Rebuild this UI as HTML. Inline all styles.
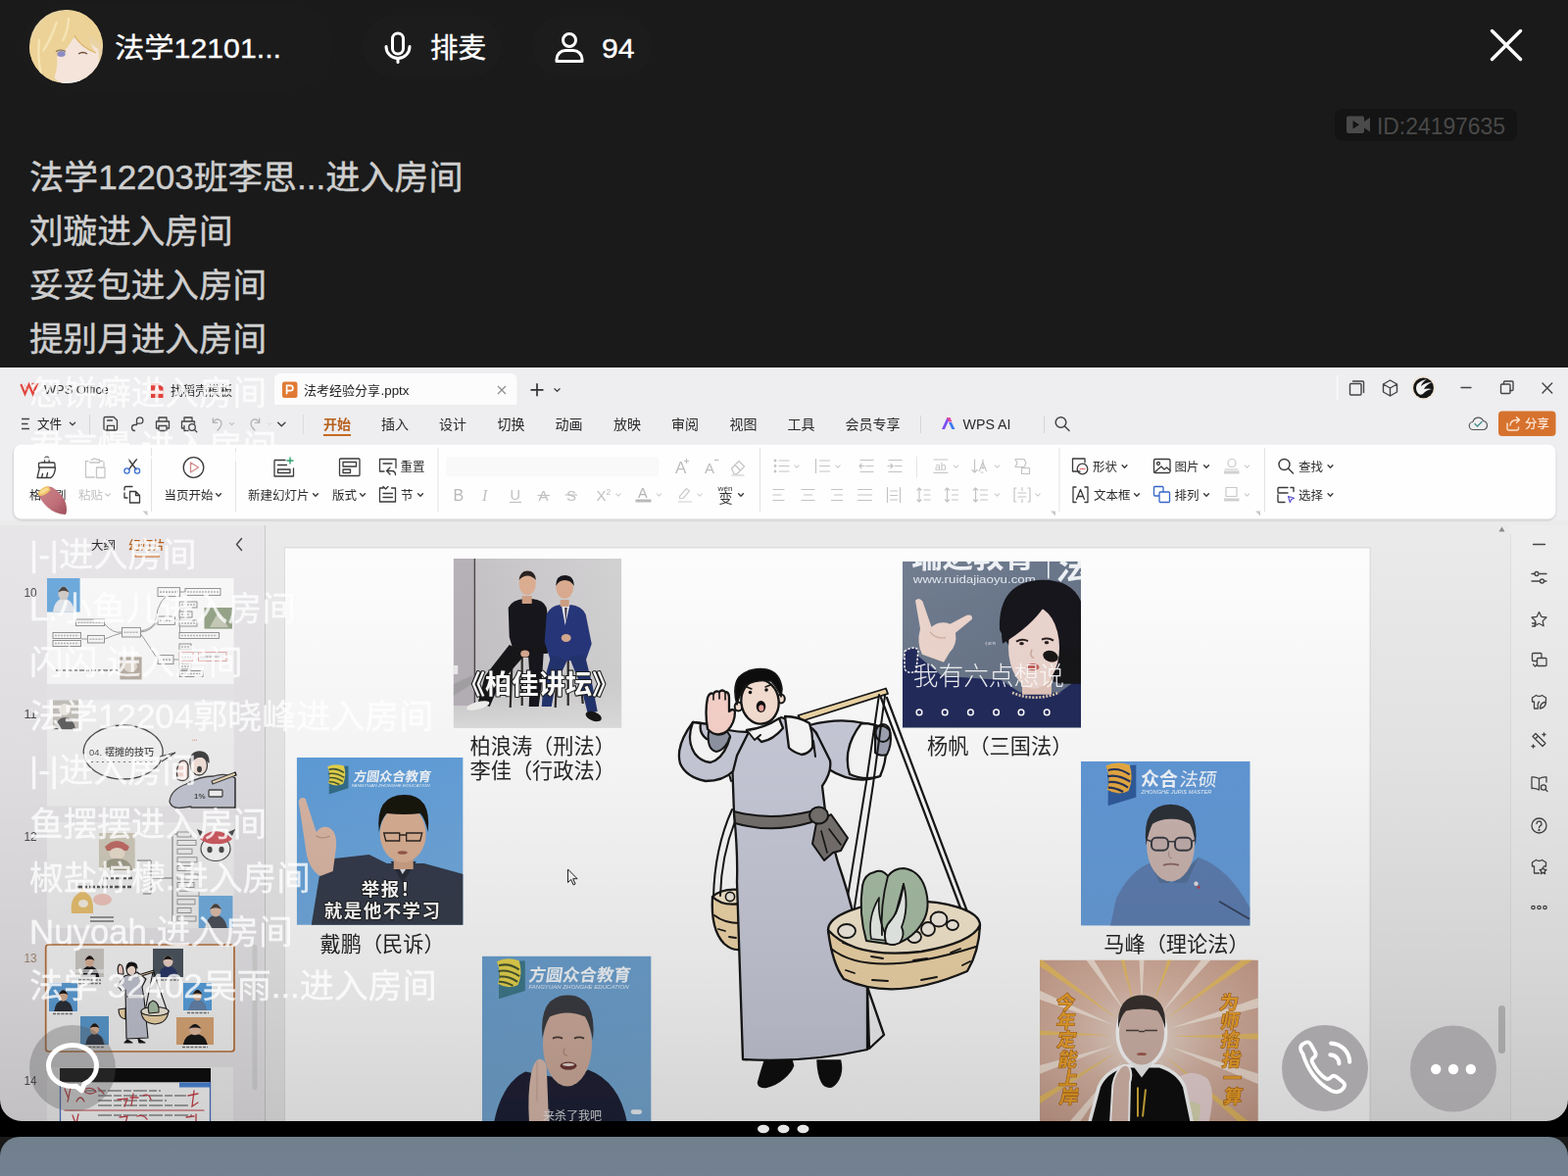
<!DOCTYPE html>
<html lang="zh"><head><meta charset="utf-8"><title>live</title>
<style>html,body{margin:0;padding:0;background:#1a1a1a}body{width:1600px;height:1200px;overflow:hidden;font-family:"Liberation Sans",sans-serif}svg{display:block}text.cj{font-family:"Liberation Sans","Noto Sans CJK SC",sans-serif}</style></head>
<body>
<svg width="1600" height="1200" viewBox="0 0 1600 1200">
<rect width="1600" height="1200" fill="#1a1a1a"/>
<rect x="22" y="4" width="318" height="88" rx="44" fill="#1b1b1b"/>
<rect x="370" y="16" width="142" height="62" rx="31" fill="#1c1c1c"/>
<rect x="543" y="16" width="122" height="62" rx="31" fill="#1c1c1c"/>
<defs><radialGradient id="av" cx="45%" cy="40%" r="65%"><stop offset="0" stop-color="#f3ddb0"/><stop offset=".6" stop-color="#e8c98f"/><stop offset="1" stop-color="#cdb79a"/></radialGradient><clipPath id="avc"><circle cx="67.5" cy="47.5" r="37.5"/></clipPath></defs>
<g clip-path="url(#avc)"><rect x="30" y="10" width="76" height="76" fill="#e9d3a4"/><path d="M62 40 q22 -4 38 10 q4 22 -8 36 q-20 8 -36 -6 q-6 -22 6 -40z" fill="#f4e4da"/><path d="M28 64 Q30 18 68 10 Q104 12 108 54 Q100 40 90 36 Q92 46 98 54 Q82 48 76 36 Q70 50 58 58 Q60 70 52 88 Q36 84 28 64Z" fill="#ecd296"/><path d="M58 22 Q52 40 44 52 M70 18 Q70 30 64 42 M40 40 Q38 60 42 76" stroke="#f7e8bd" stroke-width="2.4" fill="none" opacity=".8"/><path d="M76 36 Q82 48 98 54" stroke="#d9b46c" stroke-width="1.2" fill="none"/><ellipse cx="62.5" cy="55" rx="4.2" ry="3" fill="#8c8cc4"/><path d="M57 52.5 q5 -3 10 0" stroke="#6b5a4a" stroke-width="1.2" fill="none"/><path d="M80 55 q4.5 -3 9 0" stroke="#6b4a3a" stroke-width="1.4" fill="none"/><path d="M60 86 q12 -8 30 -2 v6 h-30z" fill="#efe9e6"/></g>
<text class="cj" x="117" y="58.5" font-size="28.5" fill="#fff" stroke="#fff" stroke-width="0.34" textLength="170" lengthAdjust="spacingAndGlyphs">法学12101...</text>
<g fill="none" stroke="#fff" stroke-width="3" stroke-linecap="round"><rect x="400.5" y="34" width="11" height="21" rx="5.5"/><path d="M394 47.5 a12 12 0 0 0 24 0"/><path d="M406 60 v3.5"/></g>
<text class="cj" x="439" y="58.5" font-size="28.5" fill="#fff" stroke="#fff" stroke-width="0.34">排麦</text>
<g fill="none" stroke="#fff" stroke-width="3" stroke-linejoin="round"><circle cx="581" cy="41" r="6.5"/><path d="M568 62.5 v-2 a9 9 0 0 1 9 -9 h8 a9 9 0 0 1 9 9 v2 z"/></g>
<text class="cj" x="614" y="58.5" font-size="28.5" fill="#fff" stroke="#fff" stroke-width="0.34" textLength="33.5" lengthAdjust="spacingAndGlyphs">94</text>
<path d="M1522.5 31.5 L1551.5 60.5 M1551.5 31.5 L1522.5 60.5" stroke="#fff" stroke-width="3.4" stroke-linecap="round"/>
<rect x="1362" y="111" width="186" height="33" rx="8" fill="#141414"/>
<path d="M1374 120.5 a2 2 0 0 1 2 -2 h14 a2 2 0 0 1 2 2 v3.5 l6 -4 v14.5 l-6 -4 v3.5 a2 2 0 0 1 -2 2 h-14 a2 2 0 0 1 -2 -2 z" fill="#4a4a4a"/><path d="M1380.5 123 l6.5 4.3 l-6.5 4.3z" fill="#141414"/>
<text x="1405" y="136.5" font-size="24" fill="#494949" font-weight="normal" text-anchor="start" font-family="Liberation Sans, sans-serif" textLength="131" lengthAdjust="spacingAndGlyphs">ID:24197635</text>
<text class="cj" x="30" y="193" font-size="34.6" fill="#cfcfcf" stroke="#cfcfcf" stroke-width="0.45" textLength="442.5" lengthAdjust="spacingAndGlyphs">法学12203班李思...进入房间</text>
<text class="cj" x="30" y="248" font-size="34.6" fill="#cfcfcf" stroke="#cfcfcf" stroke-width="0.45">刘璇进入房间</text>
<text class="cj" x="30" y="303" font-size="34.6" fill="#cfcfcf" stroke="#cfcfcf" stroke-width="0.45">妥妥包进入房间</text>
<text class="cj" x="30" y="358" font-size="34.6" fill="#cfcfcf" stroke="#cfcfcf" stroke-width="0.45">提别月进入房间</text>
<rect x="0" y="1120" width="1600" height="40" fill="#000"/>
<defs><clipPath id="shc"><path d="M0 375 H1600 V1122 a22 22 0 0 1 -22 22 H22 a22 22 0 0 1 -22 -22 Z"/></clipPath></defs>
<defs><filter id="soft" x="0" y="0" width="100%" height="100%" filterUnits="userSpaceOnUse"><feGaussianBlur stdDeviation="0.38"/></filter></defs>
<g clip-path="url(#shc)"><g filter="url(#soft)">
<rect x="0" y="375" width="1600" height="770" fill="#ececec"/>
<rect x="0" y="375" width="1600" height="170" fill="#eeedef"/>
<rect x="0" y="531" width="1600" height="14" fill="#ebebec"/>
<path d="M21.3 392 l4.2 10 l4 -9.5 l4 9.5 l4.4 -10.3 h-5.5" fill="none" stroke="#e0463c" stroke-width="2.1" stroke-linejoin="miter"/>
<path d="M25.2 392.5 l2.2 5.2 M33.6 392.2 l-1.4 3.4" fill="none" stroke="#f6b1ab" stroke-width="1" />
<text x="45" y="402" font-size="13" fill="#333" font-weight="normal" text-anchor="start" font-family="Liberation Sans, sans-serif" textLength="66" lengthAdjust="spacingAndGlyphs">WPS Office</text>
<path d="M154 391 h8 l4.5 4.5 v10.5 h-12.5z" fill="#e0433a"/><path d="M157.5 401 l2.7 -7 l2.7 7 m-4.4 -2.3 h3.4" stroke="#fff" stroke-width="1.4" fill="none"/><rect x="152" y="398.5" width="14" height="3.4" fill="#f5b7b2" opacity=".85"/>
<text class="cj" x="174" y="403" font-size="12.6" fill="#2b2b2b">找稻壳模板</text>
<path d="M280 413 V387 a6 6 0 0 1 6 -6 H521.5 a6 6 0 0 1 6 6 V413 Z" fill="#fcfcfc"/>
<rect x="288" y="389.5" width="15.5" height="16.5" fill="#e07a34" rx="2.5"/>
<path d="M292.6 402.3 v-9 h3.6 a2.7 2.7 0 0 1 0 5.4 h-3.6" stroke="#fff" stroke-width="1.7" fill="none"/>
<text class="cj" x="310" y="403" font-size="13" fill="#222">法考经验分享</text>
<text x="388.5" y="402.6" font-size="13.4" fill="#222" font-weight="normal" text-anchor="start" font-family="Liberation Sans, sans-serif" textLength="29" lengthAdjust="spacingAndGlyphs">.pptx</text>
<path d="M508 394 l8 8 M516 394 l-8 8" fill="none" stroke="#8e8e8e" stroke-width="1.2" />
<path d="M541.5 397.8 h13 M548 391.3 v13" fill="none" stroke="#333" stroke-width="1.7" />
<path d="M565.9 396.7L568.5 399.3L571.1 396.7" fill="none" stroke="#444" stroke-width="1.3" stroke-linecap="round" stroke-linejoin="round"/>
<path d="M1364.5 383L1364.5 407.5" stroke="#fbfbfb" stroke-width="1.5" fill="none" />
<g fill="none" stroke="#444" stroke-width="1.4" stroke-linecap="round" stroke-linejoin="round" >
<rect x="1377.5" y="391.5" width="11.5" height="11.5" rx="1"/><path d="M1380.5 389 h10 a1 1 0 0 1 1 1 v10.5"/>
<path d="M1418.5 388 l7 4 v8 l-7 4 l-7 -4 v-8 z M1411.5 392 l7 4 l7 -4 M1418.5 396 v8"/>
<path d="M1491 395.5 h10"/>
<rect x="1531.5" y="392" width="9.5" height="9.5" rx="1"/><path d="M1534.5 392 v-2 a1 1 0 0 1 1 -1 h7.5 a1 1 0 0 1 1 1 v7.5 a1 1 0 0 1 -1 1 h-2"/>
<path d="M1574 391 l9.7 10 M1583.7 391 l-9.7 10"/>
</g>
<circle cx="1452.5" cy="395.8" r="11.6" fill="#efe3cf"/><circle cx="1452.5" cy="395.8" r="10.4" fill="#151515"/><path d="M1446 392 q4 -4 10 -5 q-5 3 -6 7 q5 -4 11 -4 q-6 3 -8 7 q4 -1 8 0 q-6 1 -9 5 q-4 2 -6 -2 q-2 -4 0 -8z" fill="#f2f2f2"/>
<path d="M22 427.5 h8 M22 432.5 h6.5 M22 437.5 h8" fill="none" stroke="#444" stroke-width="1.4" />
<text class="cj" x="38" y="437.2" font-size="12.6" fill="#222">文件</text>
<path d="M71.4 431.2L74 433.8L76.6 431.2" fill="none" stroke="#444" stroke-width="1.3" stroke-linecap="round" stroke-linejoin="round"/>
<path d="M91.5 423L91.5 443" stroke="#d6d6d6" stroke-width="1" fill="none" />
<g fill="none" stroke="#444" stroke-width="1.3" stroke-linecap="round" stroke-linejoin="round" >
<path d="M106 427 a1.5 1.5 0 0 1 1.5 -1.5 h8.5 l3.5 3.5 v8.5 a1.5 1.5 0 0 1 -1.5 1.5 h-10.5 a1.5 1.5 0 0 1 -1.5 -1.5 z M109.5 439.3 v-5 h7 v5 M109.5 429 h5"/>
<path d="M137.5 439.5 a3 3 0 1 1 0 -6 h2 v-4.5 a3.2 3.2 0 1 1 3.2 3.2 h-3"/>
<path d="M162 430 v-4 h8 v4 M162 437 h-2.5 v-7 h13 v7 h-2.5 M162 434.5 h8 v5 h-8 z"/>
<path d="M188 430 v-4 h8 v4 M188 437 h-2.5 v-7 h13 v2 M188 434.5 v5 h4"/><circle cx="196" cy="436" r="3.3"/><path d="M198.4 438.4 l2.4 2.4"/>
</g>
<g fill="none" stroke="#b4b4b4" stroke-width="1.3" stroke-linecap="round" stroke-linejoin="round" >
<path d="M217.5 431 q4 -6 8 -1 q2 4 -3.5 9 M217.3 427 v4.3 h4.3"/>
<path d="M264.5 431 q-4 -6 -8 -1 q-2 4 3.5 9 M264.7 427 v4.3 h-4.3"/>
</g>
<path d="M234.3 431.4L236.5 433.6L238.7 431.4" fill="none" stroke="#c0c0c0" stroke-width="1.1" stroke-linecap="round" stroke-linejoin="round"/>
<path d="M273 431.5L275 433.5L277 431.5" fill="none" stroke="#d6d6d6" stroke-width="1" stroke-linecap="round" stroke-linejoin="round"/>
<path d="M283.7 431.2L287.3 434.8L290.90000000000003 431.2" fill="none" stroke="#444" stroke-width="1.5" stroke-linecap="round" stroke-linejoin="round"/>
<path d="M309.5 423L309.5 443" stroke="#dddddd" stroke-width="1" fill="none" />
<text class="cj" x="330" y="438" font-size="14" fill="#b8611f" font-weight="bold">开始</text>
<rect x="330" y="443" width="28" height="2" fill="#c56a24"/>
<text class="cj" x="389" y="438" font-size="14" fill="#2b2b2b">插入</text>
<text class="cj" x="448" y="438" font-size="14" fill="#2b2b2b">设计</text>
<text class="cj" x="507.5" y="438" font-size="14" fill="#2b2b2b">切换</text>
<text class="cj" x="566.5" y="438" font-size="14" fill="#2b2b2b">动画</text>
<text class="cj" x="626" y="438" font-size="14" fill="#2b2b2b">放映</text>
<text class="cj" x="685" y="438" font-size="14" fill="#2b2b2b">审阅</text>
<text class="cj" x="744.5" y="438" font-size="14" fill="#2b2b2b">视图</text>
<text class="cj" x="803.5" y="438" font-size="14" fill="#2b2b2b">工具</text>
<text class="cj" x="862.5" y="438" font-size="14" fill="#2b2b2b">会员专享</text>
<path d="M939.5 424L939.5 442" stroke="#d6d6d6" stroke-width="1" fill="none" />
<path d="M961 438 l5.5 -12 h3 l-5.5 12z" fill="#7b4df0"/><path d="M968 431 l3 0 l3.5 7 h-3.2z" fill="#3b7cf5"/><path d="M966 426 h3.5 l2 4.5 h-3.2z" fill="#e2489d"/>
<text x="982.5" y="437.8" font-size="14" fill="#2b2b2b" font-weight="normal" text-anchor="start" font-family="Liberation Sans, sans-serif" textLength="49" lengthAdjust="spacingAndGlyphs">WPS AI</text>
<path d="M1065.5 424L1065.5 442" stroke="#d6d6d6" stroke-width="1" fill="none" />
<g fill="none" stroke="#444" stroke-width="1.5" stroke-linecap="round" stroke-linejoin="round" >
<circle cx="1082.5" cy="431" r="5.3"/><path d="M1086.5 435 l4.5 4.5"/>
</g>
<g fill="none" stroke="#555" stroke-width="1.2" stroke-linecap="round" stroke-linejoin="round" >
<path d="M1503.5 438.5 a4 4 0 0 1 -0.5 -8 a5.5 5.5 0 0 1 10.5 -1 a4.6 4.6 0 0 1 0.5 9 z"/>
</g>
<path d="M1505 432.5 l2.5 2.5 l4.5 -4.5" fill="none" stroke="#3f8f8a" stroke-width="1.3" stroke-linecap="round" stroke-linejoin="round"/>
<rect x="1529" y="419.5" width="58.5" height="25.5" fill="#d6722f" rx="4"/>
<path d="M1538 432 v5.5 a1.5 1.5 0 0 0 1.5 1.5 h8.5 a1.5 1.5 0 0 0 1.5 -1.5 v-1.5 M1541 434 q0.5 -5.5 7 -5.5 h2 M1547.5 425.8 l3 2.7 l-3 2.7" fill="none" stroke="#fbe3cf" stroke-width="1.4" stroke-linecap="round" stroke-linejoin="round"/>
<text class="cj" x="1556" y="437.2" font-size="12.4" fill="#fbe6d6" font-weight="500">分享</text>
<rect x="13" y="454.5" width="1575" height="77" rx="9" fill="#000" opacity=".05"/>
<rect x="12" y="453" width="1577" height="79.5" rx="10" fill="#000" opacity=".03"/>
<rect x="14" y="453.5" width="1573.5" height="76" fill="#fefefe" rx="8"/>
<g fill="none" stroke="#3a3a3a" stroke-width="1.3" stroke-linecap="round" stroke-linejoin="round" >
<path d="M45.5 472 v-3.5 a2.3 2.3 0 0 1 4.6 0 v3.5 M39.5 477 v-3.5 a1.5 1.5 0 0 1 1.5 -1.5 h13.5 a1.5 1.5 0 0 1 1.5 1.5 v3.5 z M40.5 477 l-2.5 10.5 h14 q4 -3 4.5 -10.5 M42.5 487.5 l1 -4 M47.5 487.5 l1 -5"/>
</g>
<text class="cj" x="30" y="510.3" font-size="12.5" fill="#2e2e2e">格式刷</text>
<g fill="none" stroke="#c6c6c6" stroke-width="1.3" stroke-linecap="round" stroke-linejoin="round" >
<path d="M92 470.5 h-4.5 v16.5 h9 M101.5 470.5 h4.5 v5 M92 472 v-3 h3 a2 2 0 0 1 3.5 0 h3 v3 z"/><rect x="98.5" y="477" width="8.5" height="10.5"/>
</g>
<text class="cj" x="80" y="510.3" font-size="12.5" fill="#c2c2c2">粘贴</text>
<path d="M107.6 503.8L110 506.2L112.4 503.8" fill="none" stroke="#c2c2c2" stroke-width="1.2" stroke-linecap="round" stroke-linejoin="round"/>
<g fill="none" stroke="#3a3a3a" stroke-width="1.3" stroke-linecap="round" stroke-linejoin="round" >
<path d="M131 468.5 l8 10.5 M139.5 468.5 l-8 10.5"/>
</g>
<g fill="none" stroke="#3b6fd4" stroke-width="1.3" stroke-linecap="round" stroke-linejoin="round" >
<circle cx="129.5" cy="480.5" r="2.6"/><circle cx="140" cy="480.5" r="2.6"/>
</g>
<g fill="none" stroke="#3a3a3a" stroke-width="1.3" stroke-linecap="round" stroke-linejoin="round" >
<path d="M127 500 v-2 a1.5 1.5 0 0 1 1.5 -1.5 h6.5 M127 503 v5 h3"/><path d="M132.5 501.5 h6 l4 4 v7.5 h-10z M138.5 501.5 v4 h4"/>
</g>
<path d="M145.5 521.5 h5 v5 z" fill="#c9c9c9" />
<path d="M154.5 457L154.5 522" stroke="#e3e3e3" stroke-width="1" fill="none" />
<g fill="none" stroke="#3a3a3a" stroke-width="1.3" stroke-linecap="round" stroke-linejoin="round" >
<circle cx="197.5" cy="477" r="10.3"/>
</g>
<path d="M194.5 472 l8 5 l-8 5z" fill="none" stroke="#d08b8b" stroke-width="1.3" stroke-linejoin="round"/>
<text class="cj" x="167.5" y="510.3" font-size="12.5" fill="#2e2e2e">当页开始</text>
<path d="M220.6 503.8L223 506.2L225.4 503.8" fill="none" stroke="#3a3a3a" stroke-width="1.4" stroke-linecap="round" stroke-linejoin="round"/>
<path d="M240.5 457L240.5 522" stroke="#e3e3e3" stroke-width="1" fill="none" />
<g fill="none" stroke="#3a3a3a" stroke-width="1.3" stroke-linecap="round" stroke-linejoin="round" >
<path d="M291 469.5 h-11 v16.5 h19.5 v-8 M283.5 474.5 h9 M283.5 479 h12.5 v3.5 h-12.5z"/>
</g>
<path d="M296 466.5 v7 M292.5 470 h7" fill="none" stroke="#2f9e6e" stroke-width="1.4" />
<text class="cj" x="253" y="510.3" font-size="12.5" fill="#2e2e2e">新建幻灯片</text>
<path d="M319.6 503.8L322 506.2L324.4 503.8" fill="none" stroke="#3a3a3a" stroke-width="1.4" stroke-linecap="round" stroke-linejoin="round"/>
<g fill="none" stroke="#3a3a3a" stroke-width="1.3" stroke-linecap="round" stroke-linejoin="round" >
<rect x="346.5" y="468" width="20.5" height="17.5" rx="1"/><rect x="350" y="471.5" width="13.5" height="4.5"/><rect x="350" y="479" width="7.5" height="3.5"/>
</g>
<text class="cj" x="339" y="510.3" font-size="12.5" fill="#2e2e2e">版式</text>
<path d="M367.6 503.8L370 506.2L372.4 503.8" fill="none" stroke="#3a3a3a" stroke-width="1.4" stroke-linecap="round" stroke-linejoin="round"/>
<g fill="none" stroke="#3a3a3a" stroke-width="1.3" stroke-linecap="round" stroke-linejoin="round" >
<path d="M392 481 h-4.5 v-12.5 h16.5 v9 M391 473 h9 M398 484 l-3.5 -3.5 l3.5 -3.5 M394.5 480.5 h5 q4 0 4 4"/>
<path d="M391 498 h-3.5 v14 h16 v-14 h-4 M391 496.5 l2.5 2.5 l2.5 -2.5 M391 503.5 h9.5 M391 507.5 h9.5"/>
</g>
<text class="cj" x="408.5" y="481.3" font-size="12.5" fill="#2e2e2e">重置</text>
<text class="cj" x="409" y="510.3" font-size="12.5" fill="#2e2e2e">节</text>
<path d="M426.6 503.8L429 506.2L431.4 503.8" fill="none" stroke="#3a3a3a" stroke-width="1.4" stroke-linecap="round" stroke-linejoin="round"/>
<path d="M447 457L447 522" stroke="#e3e3e3" stroke-width="1" fill="none" />
<rect x="455" y="466" width="217" height="20.5" fill="#f9f9f9" rx="3"/>
<text x="689" y="482.5" font-size="17" fill="#bdbdbd" font-weight="normal" text-anchor="start" font-family="Liberation Sans, sans-serif">A</text>
<path d="M700.5 468 v5 M698 470.5 h5" fill="none" stroke="#bdbdbd" stroke-width="1.1" />
<text x="719" y="482.5" font-size="15" fill="#bdbdbd" font-weight="normal" text-anchor="start" font-family="Liberation Sans, sans-serif">A</text>
<path d="M729 469.5 h4.5" fill="none" stroke="#bdbdbd" stroke-width="1.1" />
<g fill="none" stroke="#c4c4c4" stroke-width="1.2" stroke-linecap="round" stroke-linejoin="round" >
<path d="M746.5 478 l7.5 -7.5 l5.5 5.5 l-7.5 7.5 h-3z M750 474.5 l5.5 5.5 M747 485 h12"/>
</g>
<text x="462.5" y="510.5" font-size="16" fill="#b8b8b8" font-weight="normal" text-anchor="start" font-family="Liberation Sans, sans-serif">B</text>
<text x="492" y="510.5" font-size="16" fill="#c2c2c2" font-style="italic" font-family="Liberation Serif, serif">I</text>
<text x="520.5" y="509.5" font-size="14.5" fill="#c0c0c0" font-weight="normal" text-anchor="start" font-family="Liberation Sans, sans-serif">U</text>
<path d="M520 512.5 h12" fill="none" stroke="#c0c0c0" stroke-width="1.1" />
<text x="549.5" y="510.5" font-size="15" fill="#c0c0c0" font-weight="normal" text-anchor="start" font-family="Liberation Sans, sans-serif">A</text>
<path d="M548.5 505.5 h12.5" fill="none" stroke="#c0c0c0" stroke-width="1.1" />
<text x="578" y="510.5" font-size="15" fill="#c0c0c0" font-weight="normal" text-anchor="start" font-family="Liberation Sans, sans-serif">S</text>
<path d="M576.5 505 h12.5" fill="none" stroke="#c0c0c0" stroke-width="1.1" />
<text x="608.5" y="511" font-size="15" fill="#c0c0c0" font-weight="normal" text-anchor="start" font-family="Liberation Sans, sans-serif">X</text>
<text x="618.5" y="504.5" font-size="8.5" fill="#c0c0c0" font-weight="normal" text-anchor="start" font-family="Liberation Sans, sans-serif">2</text>
<path d="M628.8 503.9L631 506.1L633.2 503.9" fill="none" stroke="#cfcfcf" stroke-width="1.1" stroke-linecap="round" stroke-linejoin="round"/>
<text x="651" y="508" font-size="14.5" fill="#b4b4b4" font-weight="normal" text-anchor="start" font-family="Liberation Sans, sans-serif">A</text>
<rect x="648.5" y="509.5" width="16" height="3" fill="#b9b9b9"/>
<path d="M670.3 503.9L672.5 506.1L674.7 503.9" fill="none" stroke="#cfcfcf" stroke-width="1.1" stroke-linecap="round" stroke-linejoin="round"/>
<g fill="none" stroke="#cdcdcd" stroke-width="1.2" stroke-linecap="round" stroke-linejoin="round" >
<path d="M693.5 506.5 l7 -8 l3 2.5 l-6.5 7.5 h-3.5z M692.5 512 h13"/>
</g>
<path d="M711.8 503.9L714 506.1L716.2 503.9" fill="none" stroke="#d4d4d4" stroke-width="1.1" stroke-linecap="round" stroke-linejoin="round"/>
<text class="cj" x="733.5" y="513" font-size="14" fill="#333">变</text>
<text x="732.5" y="501" font-size="7.5" fill="#333" font-weight="normal" text-anchor="start" font-family="Liberation Sans, sans-serif" textLength="15" lengthAdjust="spacingAndGlyphs">wén</text>
<path d="M753.6 503.8L756 506.2L758.4 503.8" fill="none" stroke="#3a3a3a" stroke-width="1.4" stroke-linecap="round" stroke-linejoin="round"/>
<path d="M775.5 457L775.5 522" stroke="#e3e3e3" stroke-width="1" fill="none" />
<g fill="none" stroke="#c3c3c3" stroke-width="1.2" stroke-linecap="round" stroke-linejoin="round" >
<path d="M795 470 h10 M795 475.5 h10 M795 481 h10"/><circle cx="791" cy="470" r=".8"/><circle cx="791" cy="475.5" r=".8"/><circle cx="791" cy="481" r=".8"/>
<path d="M836.5 470 h10 M836.5 475.5 h10 M836.5 481 h10 M832.5 468.5 v14"/>
<path d="M878 469.5 h13 M884 475.5 h7 M878 481.5 h13 M882 475.5 h-5 m2 -2 l-2 2 l2 2"/>
<path d="M907 469.5 h13 M913 475.5 h7 M907 481.5 h13 M906 475.5 h5 m-2 -2 l2 2 l-2 2"/>
<path d="M953 469 h14 M953 482.5 h14"/>
<path d="M994.5 469 v13 m-2.5 -2.5 l2.5 2.5 l2.5 -2.5 M1003 469 v9 M1001 482 h2"/>
<path d="M1036 468.5 h9 l2 4 l-2 4 h-9 l2 -4z"/><rect x="1042.5" y="477.5" width="8" height="6"/>
<path d="M789 499.5 h11 M789 505 h8 M789 510.5 h11"/>
<path d="M818 499.5 h13 M820.5 505 h8 M818 510.5 h13"/>
<path d="M848.5 499.5 h11 M851.5 505 h8 M848.5 510.5 h11"/>
<path d="M875.5 499.5 h14 M875.5 505 h14 M875.5 510.5 h14"/>
<path d="M905.5 497.5 v15 M918.5 497.5 v15 M908.5 501 h7 M908.5 505.5 h7 M908.5 510 h7"/>
<path d="M938 498 v14 m-2 -12 l2 -2 l2 2 m-4 10 l2 2 l2 -2 M943 500 h6 M943 505 h6 M943 510 h6"/>
<path d="M966.5 498 v14 m-2 -12 l2 -2 l2 2 m-4 10 l2 2 l2 -2 M971.5 500 h6 M971.5 505 h6 M971.5 510 h6"/>
<path d="M995.5 498 v14 m-2 -12 l2 -2 l2 2 m-4 10 l2 2 l2 -2 M1000.5 500 h7 M1000.5 505 h7 M1000.5 510 h7"/>
<path d="M1037 498 h-2 v14 h2 M1049 498 h2 v14 h-2 M1039 503 h8 M1039 507 h8 M1043 497.5 v3 M1043 509.5 v3"/>
</g>
<text x="954" y="480" font-size="10.5" fill="#c3c3c3" font-weight="normal" text-anchor="start" font-family="Liberation Sans, sans-serif">ab</text>
<text x="998.5" y="481" font-size="13" fill="#c3c3c3" font-weight="normal" text-anchor="start" font-family="Liberation Sans, sans-serif">A</text>
<path d="M810.8 474.9L813 477.1L815.2 474.9" fill="none" stroke="#cccccc" stroke-width="1.1" stroke-linecap="round" stroke-linejoin="round"/>
<path d="M852.8 474.9L855 477.1L857.2 474.9" fill="none" stroke="#cccccc" stroke-width="1.1" stroke-linecap="round" stroke-linejoin="round"/>
<path d="M973.3 474.9L975.5 477.1L977.7 474.9" fill="none" stroke="#cccccc" stroke-width="1.1" stroke-linecap="round" stroke-linejoin="round"/>
<path d="M1015.3 474.9L1017.5 477.1L1019.7 474.9" fill="none" stroke="#cccccc" stroke-width="1.1" stroke-linecap="round" stroke-linejoin="round"/>
<path d="M1015.3 503.9L1017.5 506.1L1019.7 503.9" fill="none" stroke="#cccccc" stroke-width="1.1" stroke-linecap="round" stroke-linejoin="round"/>
<path d="M1056.8 503.9L1059 506.1L1061.2 503.9" fill="none" stroke="#cccccc" stroke-width="1.1" stroke-linecap="round" stroke-linejoin="round"/>
<path d="M935.5 466L935.5 487.5" stroke="#e6e6e6" stroke-width="1" fill="none" />
<path d="M1072 521.5 h5 v5 z" fill="#c9c9c9" />
<path d="M1081 457L1081 522" stroke="#e3e3e3" stroke-width="1" fill="none" />
<g fill="none" stroke="#3a3a3a" stroke-width="1.3" stroke-linecap="round" stroke-linejoin="round" >
<path d="M1102 481 h-7.5 v-13 h12.5 v4"/><circle cx="1104.5" cy="478.5" r="5.3"/>
<path d="M1098 497 h-3 v15.5 h3 M1107 497 h3 v15.5 h-3 M1098.5 509.5 l4 -10 l4 10 M1100 506.5 h5"/>
</g>
<path d="M1101.5 478.5 h6" fill="none" stroke="#d66" stroke-width="1.1" />
<text class="cj" x="1115" y="481.3" font-size="12.5" fill="#2e2e2e">形状</text>
<path d="M1145.1 474.8L1147.5 477.2L1149.9 474.8" fill="none" stroke="#3a3a3a" stroke-width="1.4" stroke-linecap="round" stroke-linejoin="round"/>
<text class="cj" x="1116" y="510.3" font-size="12.5" fill="#2e2e2e">文本框</text>
<path d="M1157.6 503.8L1160 506.2L1162.4 503.8" fill="none" stroke="#3a3a3a" stroke-width="1.4" stroke-linecap="round" stroke-linejoin="round"/>
<g fill="none" stroke="#3a3a3a" stroke-width="1.3" stroke-linecap="round" stroke-linejoin="round" >
<rect x="1177.5" y="468.5" width="16.5" height="14" rx="1.5"/><circle cx="1182" cy="473" r="1.5"/><path d="M1178 482 l7 -6 l3 3 l2.5 -2 l3.5 3"/>
</g>
<g fill="none" stroke="#3465c9" stroke-width="1.3" stroke-linecap="round" stroke-linejoin="round" >
<rect x="1177.5" y="496.5" width="9.5" height="9.5" rx="1"/><rect x="1183" y="502" width="10.5" height="10.5" rx="1" fill="#fefefe"/>
</g>
<text class="cj" x="1198.5" y="481.3" font-size="12.5" fill="#2e2e2e">图片</text>
<path d="M1228.6 474.8L1231 477.2L1233.4 474.8" fill="none" stroke="#3a3a3a" stroke-width="1.4" stroke-linecap="round" stroke-linejoin="round"/>
<text class="cj" x="1198.5" y="510.3" font-size="12.5" fill="#2e2e2e">排列</text>
<path d="M1228.6 503.8L1231 506.2L1233.4 503.8" fill="none" stroke="#3a3a3a" stroke-width="1.4" stroke-linecap="round" stroke-linejoin="round"/>
<g fill="none" stroke="#c8c8c8" stroke-width="1.2" stroke-linecap="round" stroke-linejoin="round" >
<circle cx="1257" cy="472.5" r="4"/><path d="M1250 479 h13"/>
<rect x="1251" y="497.5" width="11" height="9"/>
</g>
<rect x="1249" y="480.5" width="15.5" height="3" fill="#d0d0d0"/>
<rect x="1249" y="508.5" width="15.5" height="3" fill="#d0d0d0"/>
<path d="M1270.3 474.9L1272.5 477.1L1274.7 474.9" fill="none" stroke="#cccccc" stroke-width="1.1" stroke-linecap="round" stroke-linejoin="round"/>
<path d="M1270.3 503.9L1272.5 506.1L1274.7 503.9" fill="none" stroke="#cccccc" stroke-width="1.1" stroke-linecap="round" stroke-linejoin="round"/>
<path d="M1281 521.5 h5 v5 z" fill="#c9c9c9" />
<path d="M1290.5 457L1290.5 522" stroke="#e3e3e3" stroke-width="1" fill="none" />
<g fill="none" stroke="#3a3a3a" stroke-width="1.4" stroke-linecap="round" stroke-linejoin="round" >
<circle cx="1310.5" cy="474" r="5.5"/><path d="M1314.5 478 l5 5"/>
<path d="M1317 497.5 h3 v4 M1314 497.5 h-9 a1 1 0 0 0 -1 1 v3.5 M1304 505 v6.5 a1 1 0 0 0 1 1 h6 M1304 503 h10"/>
</g>
<path d="M1314.5 506.5 l6 1.8 l-3 1.4 l-1.2 3z" fill="none" stroke="#5a4fd0" stroke-width="1.1" stroke-linejoin="round"/>
<text class="cj" x="1325" y="481.3" font-size="12.5" fill="#2e2e2e">查找</text>
<path d="M1355.1 474.8L1357.5 477.2L1359.9 474.8" fill="none" stroke="#3a3a3a" stroke-width="1.4" stroke-linecap="round" stroke-linejoin="round"/>
<text class="cj" x="1325" y="510.3" font-size="12.5" fill="#2e2e2e">选择</text>
<path d="M1355.1 503.8L1357.5 506.2L1359.9 503.8" fill="none" stroke="#3a3a3a" stroke-width="1.4" stroke-linecap="round" stroke-linejoin="round"/>
<path d="M1529.5 542.5 l3 -5 l3 5z" fill="#8a8a8a" />
<rect x="0" y="536" width="271" height="610" fill="#e7e5e8"/>
<rect x="271" y="536" width="1270" height="610" fill="#eaeaea"/>
<rect x="1541" y="536" width="59" height="610" fill="#ededee"/>
<path d="M270.5 536L270.5 1145" stroke="#c9c9c9" stroke-width="1" fill="none" />
<path d="M1541.5 545L1541.5 1145" stroke="#dedede" stroke-width="1" fill="none" />
<text class="cj" x="93" y="560.5" font-size="12.5" fill="#2a2a2a">大纲</text>
<text class="cj" x="131" y="560.5" font-size="12.5" fill="#b8611f" font-weight="500">幻灯片</text>
<rect x="137" y="566.5" width="26" height="2" fill="#c56a24"/>
<path d="M246.5 549.5 l-5 6 l5 6" fill="none" stroke="#444" stroke-width="1.4" stroke-linecap="round" stroke-linejoin="round"/>
<text x="24.5" y="608.6" font-size="12" fill="#4c4c4c" font-weight="normal" text-anchor="start" font-family="Liberation Sans, sans-serif" textLength="13.2" lengthAdjust="spacingAndGlyphs">10</text>
<text x="24.5" y="733" font-size="12" fill="#4c4c4c" font-weight="normal" text-anchor="start" font-family="Liberation Sans, sans-serif" textLength="13.2" lengthAdjust="spacingAndGlyphs">11</text>
<text x="24.5" y="857.5" font-size="12" fill="#4c4c4c" font-weight="normal" text-anchor="start" font-family="Liberation Sans, sans-serif" textLength="13.2" lengthAdjust="spacingAndGlyphs">12</text>
<text x="24.5" y="982.3" font-size="12" fill="#a48a76" font-weight="normal" text-anchor="start" font-family="Liberation Sans, sans-serif" textLength="13.2" lengthAdjust="spacingAndGlyphs">13</text>
<text x="24.5" y="1107" font-size="12" fill="#4c4c4c" font-weight="normal" text-anchor="start" font-family="Liberation Sans, sans-serif" textLength="13.2" lengthAdjust="spacingAndGlyphs">14</text>
<rect x="48" y="590" width="190.5" height="108" fill="#fbfbfb"/>
<rect x="48" y="590" width="33.6" height="34.5" fill="#4a97d8"/>
<path d="M54 624.5 q1.7 -13.1 10.8 -13.8 q9.4 0.7 11.4 13.8z" fill="#dfe3ea"/>
<ellipse cx="64.8" cy="605.5" rx="5.4" ry="6.9" fill="#c9c2bd"/>
<path d="M59.1 604.5 q5.7 -11.7 11.4 0 q-5.7 -3.5 -11.4 0z" fill="#1a1715"/>
<g fill="none" stroke="#7a7a7a" stroke-width=".9"><path d="M143 644 q14 -2 16 -12 q2 -22 18 -28 M143 645 q10 0 18 -11 M143 646 q10 14 18 27 M124 645 q-8 2 -17 -8 M124 646 q-8 2 -17 6 M89 652 h-6 M183.5 604 h5.5 M178.5 633 h5 v-12 h6 M183.5 633 v14 h0 M177 673 h6 v-8 h19 M183 673 v14"/></g>
<rect x="124.5" y="640.4" width="18.9" height="9.6" fill="#fafafa" stroke="#6e6e6e" stroke-width="0.9"/>
<path d="M126.5 645.2 H141.4" stroke="#8a8a8a" stroke-width="1.6" stroke-dasharray="2 1" opacity=".75"/>
<rect x="161" y="599.6" width="22.6" height="9" fill="#fafafa" stroke="#6e6e6e" stroke-width="0.9"/>
<path d="M163 604.1 H181.6" stroke="#8a8a8a" stroke-width="1.6" stroke-dasharray="2 1" opacity=".75"/>
<rect x="189" y="600.5" width="36" height="6.9" fill="#fafafa" stroke="#6e6e6e" stroke-width="0.9"/>
<path d="M191 604 H223" stroke="#8a8a8a" stroke-width="1.6" stroke-dasharray="2 1" opacity=".75"/>
<rect x="161" y="629" width="17.5" height="8.4" fill="#fafafa" stroke="#6e6e6e" stroke-width="0.9"/>
<path d="M163 633.2 H176.5" stroke="#8a8a8a" stroke-width="1.6" stroke-dasharray="2 1" opacity=".75"/>
<rect x="183" y="614" width="18" height="6" fill="#fafafa" stroke="#6e6e6e" stroke-width="0.9"/>
<path d="M185 617 H199" stroke="#8a8a8a" stroke-width="1.6" stroke-dasharray="2 1" opacity=".75"/>
<rect x="183" y="624" width="13" height="6" fill="#fafafa" stroke="#6e6e6e" stroke-width="0.9"/>
<path d="M185 627 H194" stroke="#8a8a8a" stroke-width="1.6" stroke-dasharray="2 1" opacity=".75"/>
<rect x="183" y="633" width="18" height="6" fill="#fafafa" stroke="#6e6e6e" stroke-width="0.9"/>
<path d="M185 636 H199" stroke="#8a8a8a" stroke-width="1.6" stroke-dasharray="2 1" opacity=".75"/>
<rect x="183" y="645.5" width="40.5" height="6" fill="#fafafa" stroke="#6e6e6e" stroke-width="0.9"/>
<path d="M185 648.5 H221.5" stroke="#8a8a8a" stroke-width="1.6" stroke-dasharray="2 1" opacity=".75"/>
<rect x="77.4" y="632" width="29.1" height="6.6" fill="#fafafa" stroke="#6e6e6e" stroke-width="0.9"/>
<path d="M79.4 635.3 H104.5" stroke="#8a8a8a" stroke-width="1.6" stroke-dasharray="2 1" opacity=".75"/>
<rect x="54" y="645.5" width="28.5" height="6" fill="#fafafa" stroke="#6e6e6e" stroke-width="0.9"/>
<path d="M56 648.5 H80.5" stroke="#8a8a8a" stroke-width="1.6" stroke-dasharray="2 1" opacity=".75"/>
<rect x="54" y="653.5" width="28.5" height="6" fill="#fafafa" stroke="#6e6e6e" stroke-width="0.9"/>
<path d="M56 656.5 H80.5" stroke="#8a8a8a" stroke-width="1.6" stroke-dasharray="2 1" opacity=".75"/>
<rect x="89.4" y="648.5" width="17.1" height="7.5" fill="#fafafa" stroke="#6e6e6e" stroke-width="0.9"/>
<path d="M91.4 652.2 H104.5" stroke="#8a8a8a" stroke-width="1.6" stroke-dasharray="2 1" opacity=".75"/>
<rect x="161" y="668.6" width="16" height="9" fill="#fafafa" stroke="#6e6e6e" stroke-width="0.9"/>
<path d="M163 673.1 H175" stroke="#8a8a8a" stroke-width="1.6" stroke-dasharray="2 1" opacity=".75"/>
<rect x="183" y="657" width="12" height="6" fill="#fafafa" stroke="#6e6e6e" stroke-width="0.9"/>
<path d="M185 660 H193" stroke="#8a8a8a" stroke-width="1.6" stroke-dasharray="2 1" opacity=".75"/>
<rect x="183" y="665.6" width="14" height="9" fill="#fafafa" stroke="#d88" stroke-width="0.9"/>
<path d="M185 670.1 H195" stroke="#8a8a8a" stroke-width="1.6" stroke-dasharray="2 1" opacity=".75"/>
<rect x="202.5" y="665.6" width="28.5" height="9" fill="#fafafa" stroke="#d88" stroke-width="0.9"/>
<path d="M204.5 670.1 H229" stroke="#8a8a8a" stroke-width="1.6" stroke-dasharray="2 1" opacity=".75"/>
<rect x="183" y="677" width="12" height="6" fill="#fafafa" stroke="#6e6e6e" stroke-width="0.9"/>
<path d="M185 680 H193" stroke="#8a8a8a" stroke-width="1.6" stroke-dasharray="2 1" opacity=".75"/>
<rect x="183" y="684.5" width="24" height="6" fill="#fafafa" stroke="#6e6e6e" stroke-width="0.9"/>
<path d="M185 687.5 H205" stroke="#8a8a8a" stroke-width="1.6" stroke-dasharray="2 1" opacity=".75"/>
<rect x="208.5" y="620" width="28.5" height="21.6" fill="#7d8f6c"/>
<path d="M214 640 l9 -16 l10 16z" fill="#c9cbb8" opacity=".8"/>
<rect x="122.4" y="670.4" width="22.2" height="23" fill="#a89c8e"/>
<ellipse cx="133" cy="680" rx="7" ry="6" fill="#ddd2c6"/>
<path d="M57 684 h63" fill="none" stroke="#666" stroke-width="2.2" stroke-dasharray="5 2 3 2" opacity=".75"/>
<rect x="48" y="714.5" width="190.5" height="108" fill="#f3f3f3"/>
<rect x="54" y="714.5" width="26" height="30" fill="#b9b4ae"/>
<ellipse cx="66" cy="724" rx="6" ry="6" fill="#efe9e2"/><path d="M56 744 q2 -12 10 -12 q9 0 11 12z" fill="#3c3a3a"/>
<ellipse cx="125.7" cy="767.5" rx="40.5" ry="27.5" fill="#f8f8f8" stroke="#222" stroke-width="1.3"/>
<path d="M163 772 l16 -4 l-14 9" fill="#f8f8f8" stroke="#222" stroke-width="1.2" />
<text x="91" y="770.5" font-size="9.2" fill="#222" font-weight="normal" text-anchor="start" font-family="Liberation Sans, sans-serif" textLength="13" lengthAdjust="spacingAndGlyphs">04.</text>
<text class="cj" x="107" y="770.8" font-size="10" fill="#222" font-weight="500">摆摊的技巧</text>
<path d="M93 777.5 h64" fill="none" stroke="#555" stroke-width="1.2" stroke-dasharray="2 3.5"/>
<g stroke="#161616" stroke-width="1.3" stroke-linejoin="round"><path d="M190 800 q-16 6 -17 18 q2 8 14 6 l8 -1 v1 h45 v-30 q-10 -6 -22 -2 q-14 0 -28 8z" fill="#b9bccc"/><path d="M181 795 q-2 -12 3 -18 q6 -3 8 4 l0 12 q-4 6 -11 2z" fill="#f8d3cb"/><path d="M216 797 l24 -9 l1 3 l-24 9z" fill="#edd5a6"/><rect x="213" y="806" width="14" height="7" rx="1" fill="#f6f6f6"/><ellipse cx="203" cy="781" rx="8.5" ry="10" fill="#f7e0d4"/><path d="M194 780 q-1 -12 9 -13 q10 0 10 11 q-4 -6 -9 -6 q-7 1 -10 8z" fill="#111"/><ellipse cx="203.5" cy="785" rx="1.8" ry="2.5" fill="#111"/></g>
<text x="198" y="815" font-size="8" fill="#222" font-weight="bold" text-anchor="start" font-family="Liberation Sans, sans-serif">1%</text>
<text x="196" y="757" font-size="5" fill="#e39a8f" font-weight="normal" text-anchor="start" font-family="Liberation Sans, sans-serif">•••</text>
<rect x="48" y="839" width="190.5" height="108" fill="#f1f1f1"/>
<rect x="101" y="850" width="36.7" height="38" fill="#c8c2ae"/>
<path d="M107 864 q12 -12 25 0 l-2 4 h-21z" fill="#b5483f"/><ellipse cx="119.5" cy="871" rx="8" ry="6" fill="#ead9c6"/><path d="M104 888 q2 -12 15 -12 q14 0 16 12z" fill="#8c8a6f"/>
<ellipse cx="220" cy="866" rx="15" ry="12.5" fill="#fbfbfb" stroke="#222" stroke-width="1.2"/><path d="M204 856 q16 -16 33 0 q-6 6 -16 5 q-10 1 -17 -5z" fill="#c8323c"/><path d="M204 853 l-3 -7 l7 3z M237 853 l3 -7 l-7 3z" fill="#222"/><ellipse cx="214" cy="867" rx="2.6" ry="3.2" fill="#222"/><ellipse cx="226" cy="867" rx="2.6" ry="3.2" fill="#222"/>
<g fill="none" stroke="#555" stroke-width="1"><path d="M176 851 v90 M176 851 h5 M176 941 h5 M176 896 h-22 v-18 h-14 M154 896 v16 h-8"/></g>
<rect x="181" y="849" width="14" height="5" fill="#f4f4f4" stroke="#666" stroke-width=".8"/>
<rect x="181" y="857.6" width="19" height="5" fill="#f4f4f4" stroke="#666" stroke-width=".8"/>
<rect x="181" y="866.2" width="15" height="5" fill="#f4f4f4" stroke="#666" stroke-width=".8"/>
<rect x="181" y="874.8" width="20" height="5" fill="#f4f4f4" stroke="#666" stroke-width=".8"/>
<rect x="181" y="883.4" width="16" height="5" fill="#f4f4f4" stroke="#666" stroke-width=".8"/>
<rect x="181" y="892" width="21" height="5" fill="#f4f4f4" stroke="#666" stroke-width=".8"/>
<rect x="181" y="900.6" width="17" height="5" fill="#f4f4f4" stroke="#666" stroke-width=".8"/>
<rect x="181" y="909.2" width="22" height="5" fill="#f4f4f4" stroke="#666" stroke-width=".8"/>
<rect x="181" y="917.8" width="18" height="5" fill="#f4f4f4" stroke="#666" stroke-width=".8"/>
<rect x="181" y="926.4" width="14" height="5" fill="#f4f4f4" stroke="#666" stroke-width=".8"/>
<rect x="181" y="935" width="19" height="5" fill="#f4f4f4" stroke="#666" stroke-width=".8"/>
<path d="M105 896 h30 M78 905 h56" fill="none" stroke="#333" stroke-width="2.6" stroke-dasharray="6 2 3 2"/>
<path d="M73 932 q-2 -16 8 -21 l3 -5 l4 5 q8 4 7 21z" fill="#e6b44c"/><ellipse cx="85" cy="922" rx="5" ry="4" fill="#f7efe0"/>
<ellipse cx="104.5" cy="918" rx="9.5" ry="6" fill="#efb9ae"/>
<path d="M92 936 h24 M92 940 h24" fill="none" stroke="#555" stroke-width="1.4" />
<rect x="202.7" y="914" width="34.8" height="33" fill="#4f9bdc"/>
<path d="M209 947 q1.7 -12.5 11.1 -13.2 q9.7 0.7 11.8 13.2z" fill="#1f2530"/>
<ellipse cx="220.1" cy="928.9" rx="5.6" ry="6.6" fill="#d9b095"/>
<path d="M214.2 927.9 q5.9 -11.2 11.8 0 q-5.9 -3.3 -11.8 0z" fill="#1a1715"/>
<rect x="47" y="964" width="192" height="109" fill="#f6f6f6" rx="3"/>
<rect x="77" y="968" width="29" height="29" fill="#cdc9c5"/>
<path d="M82.2 997 q1.5 -11 9.3 -11.6 q8.1 0.6 9.9 11.6z" fill="#1b1b22"/>
<ellipse cx="91.5" cy="981" rx="4.6" ry="5.8" fill="#d9b095"/>
<path d="M86.6 980.2 q4.9 -9.9 9.9 0 q-4.9 -2.9 -9.9 0z" fill="#1a1715"/>
<rect x="77" y="989" width="29" height="4" fill="#f0f0f0" opacity=".7"/>
<rect x="156" y="968" width="31" height="29" fill="#4b5560"/>
<path d="M161.6 997 q1.6 -11 9.9 -11.6 q8.7 0.6 10.5 11.6z" fill="#2b3566"/>
<ellipse cx="171.5" cy="981" rx="5" ry="5.8" fill="#ecd2c5"/>
<path d="M166.2 980.2 q5.3 -9.9 10.5 0 q-5.3 -2.9 -10.5 0z" fill="#1a1715"/>
<rect x="50" y="1003" width="29" height="29" fill="#5d9fd8"/>
<path d="M55.2 1032 q1.5 -11 9.3 -11.6 q8.1 0.6 9.9 11.6z" fill="#2a2e37"/>
<ellipse cx="64.5" cy="1016" rx="4.6" ry="5.8" fill="#d9b095"/>
<path d="M59.6 1015.2 q4.9 -9.9 9.9 0 q-4.9 -2.9 -9.9 0z" fill="#1a1715"/>
<rect x="187" y="1003" width="29" height="28" fill="#5aa2e0"/>
<path d="M192.2 1031 q1.5 -10.6 9.3 -11.2 q8.1 0.6 9.9 11.2z" fill="#6585ad"/>
<ellipse cx="201.5" cy="1015.6" rx="4.6" ry="5.6" fill="#d9b095"/>
<path d="M196.6 1014.8 q4.9 -9.5 9.9 0 q-4.9 -2.8 -9.9 0z" fill="#1a1715"/>
<rect x="82" y="1037" width="29" height="29" fill="#5b9bd1"/>
<path d="M87.2 1066 q1.5 -11 9.3 -11.6 q8.1 0.6 9.9 11.6z" fill="#222a3d"/>
<ellipse cx="96.5" cy="1050" rx="4.6" ry="5.8" fill="#d9b095"/>
<path d="M91.6 1049.2 q4.9 -9.9 9.9 0 q-4.9 -2.9 -9.9 0z" fill="#1a1715"/>
<rect x="180" y="1038" width="38" height="28" fill="#dca878"/>
<path d="M186.8 1066 q1.9 -10.6 12.2 -11.2 q10.6 0.6 12.9 11.2z" fill="#161616"/>
<ellipse cx="199" cy="1050.6" rx="6.1" ry="5.6" fill="#e5bda2"/>
<path d="M192.5 1049.8 q6.5 -9.5 12.9 0 q-6.5 -2.8 -12.9 0z" fill="#1a1715"/>
<path d="M80 1000 H103" fill="none" stroke="#555" stroke-width="1.3" stroke-dasharray="3 1.2" opacity=".8"/>
<path d="M80 1003.5 H103" fill="none" stroke="#555" stroke-width="1.3" stroke-dasharray="3 1.2" opacity=".8"/>
<path d="M160 1000 H184" fill="none" stroke="#555" stroke-width="1.3" stroke-dasharray="3 1.2" opacity=".8"/>
<path d="M54 1034.5 H75" fill="none" stroke="#555" stroke-width="1.3" stroke-dasharray="3 1.2" opacity=".8"/>
<path d="M191 1033.5 H213" fill="none" stroke="#555" stroke-width="1.3" stroke-dasharray="3 1.2" opacity=".8"/>
<path d="M86 1068.5 H107" fill="none" stroke="#555" stroke-width="1.3" stroke-dasharray="3 1.2" opacity=".8"/>
<path d="M186 1068.5 H212" fill="none" stroke="#555" stroke-width="1.3" stroke-dasharray="3 1.2" opacity=".8"/>
<g stroke="#1b1b1b" stroke-width="1.1" stroke-linejoin="round"><path d="M127 996 l-7 10 l5 6 l3 -2 l1 50 l22 -1 l-4 -40 l-2 -12 l4 -8 l-9 -7z" fill="#c3c5d2"/><path d="M121 994 q-2 -7 1 -10 q4 0 4 10z" fill="#f8d3cb"/><path d="M141 995 l16 -5 l0 2 l-16 5z" fill="#edd5a6"/><path d="M156 992 l-8 40 M157 992 l13 38" fill="none"/><path d="M144 1032 q1 12 14 13 q13 -1 14 -14 q-14 6 -28 1z" fill="#f0d6a9"/><ellipse cx="158" cy="1032" rx="14" ry="4.5" fill="#f3ecdd"/><path d="M152 1034 q-3 -10 4 -13 q7 2 6 12z" fill="#a9bfa6"/><path d="M121 1030 q0 9 7 10 v-11z" fill="#f0d6a9"/><ellipse cx="134" cy="990" rx="4.8" ry="5.6" fill="#f7e0d4"/><path d="M129 989 q0 -7 5 -7 q6 0 6 6 q-3 -3 -6 -3 q-3 1 -5 4z" fill="#111"/><path d="M128 1017 h16" stroke-width="2" stroke="#666"/><path d="M130 1061 l-3 3 h8z M141 1060 l1 4 h6z" fill="#111"/></g>
<rect x="46.7" y="964" width="192.3" height="109" rx="3" fill="none" stroke="#b9703a" stroke-width="1.7"/>
<rect x="48" y="1089" width="190" height="60" fill="#f2f2f2"/>
<rect x="61" y="1104" width="154" height="45" fill="#fafafa"/>
<rect x="61" y="1090" width="154" height="14.3" fill="#080808"/>
<path d="M61.5 1104 v42 M214.5 1104 v42" fill="none" stroke="#4a6fc4" stroke-width="1.3" />
<rect x="183" y="1104.5" width="31" height="5" fill="#4a86d8"/>
<path d="M84 1113 h80 M100 1118 h90 M100 1123 h70 M100 1128 h94 M100 1138 h96" fill="none" stroke="#8a8a8a" stroke-width="1.3" stroke-dasharray="14 2 8 2"/>
<g fill="none" stroke="#c8424a" stroke-width="1.3" stroke-linecap="round"><path d="M66 1111 l4 10 M72 1110 l-3 14 M78 1124 q4 -8 8 0 M84 1112 q10 -4 14 2 q-6 4 -12 0 M100 1110 l6 6 M120 1122 l10 -1 l-3 8 M133 1120 l8 0 M136 1116 l-2 12 M146 1118 q6 -3 8 4 M192 1118 l10 -2 M198 1113 l-2 16 l6 -4"/><path d="M66 1133 h142" stroke-width="1.1"/><path d="M74 1138 l3 8 M80 1137 l-2 9 M122 1140 l8 -1 l-2 7 M140 1139 q6 -2 10 3 M190 1140 l8 -1 M200 1137 v9"/></g>
<rect x="48" y="590" width="191" height="358" fill="#f2f2f3" opacity=".22"/>
<rect x="257.5" y="964" width="5" height="148" fill="#d6d6d6" rx="2.5"/>
<rect x="290" y="558" width="1109" height="590" fill="#000" opacity=".05"/>
<rect x="291" y="559.5" width="1106.5" height="590" fill="#fdfdfd"/>
<svg x="462.7" y="570" width="171.5" height="172.5" viewBox="0 0 171.5 172.5">
<defs><linearGradient id="p1g" x1="0" y1="0" x2="1" y2="0"><stop offset="0" stop-color="#c4c1c4"/><stop offset=".5" stop-color="#cccacc"/><stop offset="1" stop-color="#d3d2d3"/></linearGradient><linearGradient id="p1f" x1="0" y1="0" x2="0" y2="1"><stop offset="0" stop-color="#dcdcdc" stop-opacity="0"/><stop offset="1" stop-color="#e0e0e0"/></linearGradient></defs>
<rect x="0" y="0" width="172" height="173" fill="url(#p1g)"/>
<rect x="0" y="125" width="172" height="48" fill="url(#p1f)"/>
<rect x="0" y="0" width="21.5" height="150" fill="#b7b1b8"/>
<rect x="21" y="0" width="1.4" height="150" fill="#4c484a"/>
<rect x="0" y="109" width="4.5" height="9" fill="#ececec"/>
<path d="M0 128 L22 118 L22 126 L0 140z" fill="#9a979a" opacity=".6"/>
<path d="M60 100 l-2 52 M82 100 l4 50 M70 100 v50 M106 102 l-2 50 M128 102 l4 46 M117 102 v48" fill="none" stroke="#2e2a28" stroke-width="2.2" />
<path d="M58 99.5 h28 M103 101.5 h28" fill="none" stroke="#3a3530" stroke-width="3" />
<path d="M56 50 q4 -8 16 -9 h8 q12 1 15 9 l4 30 l-3 17 h-34 l-5 -17z" fill="#17171a" />
<path d="M57 88 L75 96 L47 128 L37 151 L25 147 L32 120 Z" fill="#17171a" />
<path d="M76 94 L92 96 L90 128 L87 151 L77 151 L78 124 Z" fill="#19191c" />
<ellipse cx="25" cy="150" rx="12" ry="3.8" fill="#f1f1ef" transform="rotate(-14 25 150)"/>
<ellipse cx="73" cy="97" rx="4.5" ry="3.5" fill="#d6a98f"/>
<path d="M70 38 h10 v8 h-10z" fill="#cf9f85"/><ellipse cx="75.5" cy="25.5" rx="8.6" ry="11.5" fill="#dcae92"/><path d="M66.8 22 q1.2 -9.5 8.8 -9.5 q8 0 8.6 9.5 q-4 -4.5 -8.6 -4.5 q-5 0 -8.8 4.5z" fill="#2a2320"/>
<path d="M95 57 q4 -9 14 -10 h10 q12 1 16 10 l6 30 l-6 17 h-36 l-6 -19z" fill="#27377a" />
<path d="M110 46 l4 22 l5 -22z" fill="#ececf2" />
<path d="M113.5 50 l1 16 l1.5 -16z" fill="#3a3040" />
<ellipse cx="115" cy="81" rx="5" ry="4" fill="#d6a98f"/>
<path d="M100 98 L116 104 L104 130 L100 151 L90 151 L92 126 Z" fill="#24326e" />
<path d="M118 100 L134 98 L142 130 L147 156 L137 158 L130 130 Z" fill="#24326e" />
<ellipse cx="143" cy="161" rx="8.5" ry="4.5" fill="#141416" transform="rotate(20 143 161)"/>
<path d="M109 42 h9 v7 h-9z" fill="#cf9f85"/><ellipse cx="113.5" cy="29.5" rx="8.8" ry="11.3" fill="#dbab90"/><path d="M104.5 28 q0 -11 9 -11 q9.5 0 9.5 11 q-3 -6 -9.5 -6 q-6 0 -9 6z" fill="#15131a"/>
<text class="cj" x="5" y="138" font-size="27.3" font-weight="bold" fill="#fff" stroke="#1d1d1d" stroke-width="2.18" paint-order="stroke" stroke-linejoin="round">《柏佳讲坛》</text>
</svg>
<text class="cj" x="479.5" y="768.6" font-size="21.2" fill="#262626">柏浪涛（刑法）</text>
<text class="cj" x="479.5" y="794.3" font-size="21.2" fill="#262626">李佳（行政法）</text>
<svg x="302.7" y="773" width="169.8" height="170.8" viewBox="0 0 169.8 170.8">
<defs><linearGradient id="p2g" x1="0" y1="0" x2=".3" y2="1"><stop offset="0" stop-color="#5f9edb"/><stop offset="1" stop-color="#73abdf"/></linearGradient></defs>
<rect x="0" y="0" width="170" height="171" fill="url(#p2g)"/>
<g transform="translate(31.5 7) scale(0.76)"><path d="M2 4 l26 -2 v30 l-26 8z" fill="#356f8c"/><path d="M0 3 q9 -5 22 -1 q4 12 -1 24 q-10 5 -20 -1 q4 -10 -1 -22z" fill="#e6d44e"/><path d="M2 7 q10 -3 20 4 M1.5 12.5 q10 -2 21 5 M2.5 18 q9 -1 18 5 M2 23 q7 0 14 4" stroke="#48582f" stroke-width="2" fill="none"/></g>
<text class="cj" transform="translate(57.5 23.6) skewX(-8)" font-size="13.2" font-weight="bold" fill="#f4f8fb">方圆众合教育</text>
<text x="56" y="29.5" font-size="4.4" fill="#eaf3fb" font-weight="normal" text-anchor="start" font-family="Liberation Sans, sans-serif" textLength="80" lengthAdjust="spacingAndGlyphs" font-style="italic">FANGYUAN ZHONGHE EDUCATION</text>
<path d="M15 171 L23 122 L30 104 L74 99 L92 108 L130 108 L170 119 V171 Z" fill="#363c4b" />
<path d="M96 106 l12 22 l14 -22z" fill="#2a2f3a" />
<path d="M101 106 l7 13 l9 -13z" fill="#dfe3ea" />
<path d="M24 121 q-13 -8 -15 -30 l-7 -46 q2 -6 7 -3 l11 34 q6 -8 14 -4 q8 5 6 22 l-3 22z" fill="#dcb8a6" />
<path d="M20 80 q6 4 14 0" fill="none" stroke="#b98e7c" stroke-width="1.2" />
<path d="M99 100 h20 v14 h-20z" fill="#cfa286"/>
<ellipse cx="108.5" cy="78" rx="23.5" ry="29" fill="#dbb195"/>
<path d="M84 76 q-4 -38 26 -38 q28 0 24 38 q-3 -14 -8 -19 q-16 2 -34 0 q-6 6 -8 19z" fill="#15130f"/>
<path d="M89 77 h16 v8 h-14z M112 77 h16 l-2 8 h-14z M105 79 h7" fill="none" stroke="#2b2420" stroke-width="1.3" />
<ellipse cx="108" cy="97" rx="5" ry="1.8" fill="#9a5a4c"/>
<text class="cj" x="66" y="141.2" font-size="18.5" font-weight="bold" letter-spacing="1.48" fill="#fff" stroke="#1d1d1d" stroke-width="2" paint-order="stroke" stroke-linejoin="round">举报！</text>
<text class="cj" x="28" y="162.6" font-size="18.5" font-weight="bold" letter-spacing="1.48" fill="#fff" stroke="#1d1d1d" stroke-width="2" paint-order="stroke" stroke-linejoin="round">就是他不学习</text>
</svg>
<text class="cj" x="326.5" y="970.5" font-size="21.2" fill="#262626">戴鹏（民诉）</text>
<svg x="492" y="975.6" width="172.3" height="170" viewBox="0 0 172.3 170">
<defs><linearGradient id="p3g" x1="0" y1="0" x2=".2" y2="1"><stop offset="0" stop-color="#6a9fcf"/><stop offset="1" stop-color="#77a8d3"/></linearGradient></defs>
<rect x="0" y="0" width="173" height="170" fill="url(#p3g)"/>
<g transform="translate(15 2.5) scale(1.03)"><path d="M2 4 l26 -2 v30 l-26 8z" fill="#3f7a8c"/><path d="M0 3 q9 -5 22 -1 q4 12 -1 24 q-10 5 -20 -1 q4 -10 -1 -22z" fill="#e6d44e"/><path d="M2 7 q10 -3 20 4 M1.5 12.5 q10 -2 21 5 M2.5 18 q9 -1 18 5 M2 23 q7 0 14 4" stroke="#48582f" stroke-width="2" fill="none"/></g>
<text class="cj" transform="translate(47 25.6) skewX(-8)" font-size="17.3" font-weight="bold" fill="#f4f8fb">方圆众合教育</text>
<text x="47.5" y="33" font-size="5.2" fill="#e4eef8" font-weight="normal" text-anchor="start" font-family="Liberation Sans, sans-serif" textLength="102" lengthAdjust="spacingAndGlyphs" font-style="italic" font-weight="bold">FANGYUAN ZHONGHE EDUCATION</text>
<path d="M12 170 Q20 130 44 118 L70 123 L92 128 L108 116 Q140 128 148 170 Z" fill="#1e2436" />
<ellipse cx="87" cy="90" rx="25" ry="43" fill="#d0ad9d"/>
<path d="M61.5 84 q-4 -44 26 -44 q30 0 25.5 46 q-3 -16 -8 -24 q-18 -8 -36 0 q-5 8 -7.5 22z" fill="#3c3d41"/>
<ellipse cx="88" cy="112" rx="8.5" ry="4.2" fill="#6e3a35"/><ellipse cx="88" cy="110.8" rx="6" ry="1.6" fill="#e9dcd6"/>
<path d="M72 84 q5 -2.5 10 0 M94 84 q5 -2.5 10 0" fill="none" stroke="#4a3a34" stroke-width="1.8" />
<path d="M84 94 q-3 6 3 8" fill="none" stroke="#b48e7e" stroke-width="1.5" />
<path d="M48 170 q-2 -30 2 -50 q3 -14 9 -15 q7 1 7 14 l2 51z" fill="#dcbcae" />
<path d="M56 108 v40" fill="none" stroke="#c9a696" stroke-width="1.2" />
<text class="cj" x="62" y="167" font-size="12" fill="#f2f2f2" opacity="0.9">来杀了我吧</text>
<rect x="151.8" y="156.7" width="11.2" height="4.6" fill="#eef3f8" rx="2.3"/>
</svg>
<svg x="921" y="572.7" width="182" height="169.8" viewBox="0 0 182 169.8">
<defs><linearGradient id="p4g" x1="0" y1="0" x2="1" y2="1"><stop offset="0" stop-color="#727e91"/><stop offset="1" stop-color="#626e82"/></linearGradient></defs>
<rect x="0" y="0" width="182" height="170" fill="url(#p4g)"/>
<text class="cj" x="9" y="6.5" font-size="31.5" font-weight="bold" fill="#eef1f5">瑞达教育</text>
<rect x="148" y="0" width="1.6" height="17.7" fill="#eef1f5"/>
<text class="cj" transform="translate(156 18.5) skewX(-10)" font-size="34" font-weight="bold" fill="#eef1f5">法</text>
<text x="10.8" y="22.6" font-size="11.6" fill="#e3e9f0" font-weight="normal" text-anchor="start" font-family="Liberation Sans, sans-serif" textLength="125" lengthAdjust="spacingAndGlyphs">www.ruidajiaoyu.com</text>
<path d="M0 100 L14 95 L40 117 L100 121 L120 134 L160 134 L182 118 V170 H0 Z" fill="#222b5c" />
<path d="M99 70 q-2 -50 44 -51 q30 0 39 22 v84 h-20 q-40 -10 -63 -55z" fill="#16141a"/>
<path d="M122 118 h30 v18 h-30z" fill="#e3c6bb"/>
<ellipse cx="134" cy="88" rx="26" ry="42" fill="#ecd6cf"/>
<path d="M102 84 q-8 -58 40 -58 q36 0 40 40 q-14 -22 -36 -22 q-14 22 -44 40z" fill="#16141a"/>
<path d="M116 82 q6 -3.5 12 -0.5 M142 80 q6 -3 12 1" fill="none" stroke="#2a2021" stroke-width="2" />
<ellipse cx="121.5" cy="84" rx="2.3" ry="1.6" fill="#2a2021"/><ellipse cx="147" cy="83" rx="2.3" ry="1.6" fill="#2a2021"/>
<path d="M132 90 q-3 7 2 9" fill="none" stroke="#caa79b" stroke-width="1.4" />
<ellipse cx="133" cy="108" rx="6.5" ry="3.6" fill="#c0625c"/>
<ellipse cx="151" cy="97" rx="8" ry="5.6" fill="#1a1518" transform="rotate(18 151 97)"/>
<path d="M112 134 q22 10 48 0" fill="none" stroke="#d8c6b0" stroke-width="2.6" stroke-dasharray="2 1.5"/>
<path d="M13 40 q4 -4 7.5 1 l9 26 q9 -7 19 -3 l17 -9 q6 -1.5 5.5 4 l-17 14 q2 12 -6 20 l-6 10 l-22 -8 q-6 -12 -2 -26z" fill="#ecd5cc" />
<path d="M28 72 q6 8 16 6" fill="none" stroke="#cfaea3" stroke-width="1.3" />
<path d="M2 92 q8 -6 14 -2 l-2 22 q-8 4 -12 -2z" fill="#222b5c" stroke="#e9e6e8" stroke-width="1.6" stroke-dasharray="2.5 1.5"/>
<text class="cj" x="10.8" y="126.3" font-size="25.7" font-weight="300" fill="#fff" opacity="0.92">我有六点想说</text>
<circle cx="17" cy="154.2" r="2.8" fill="none" stroke="#fff" stroke-width="1.5"/>
<circle cx="43.2" cy="154.2" r="2.8" fill="none" stroke="#fff" stroke-width="1.5"/>
<circle cx="69.4" cy="154.2" r="2.8" fill="none" stroke="#fff" stroke-width="1.5"/>
<circle cx="95.6" cy="154.2" r="2.8" fill="none" stroke="#fff" stroke-width="1.5"/>
<circle cx="121" cy="154.2" r="2.8" fill="none" stroke="#fff" stroke-width="1.5"/>
<circle cx="147.2" cy="154.2" r="2.8" fill="none" stroke="#fff" stroke-width="1.5"/>
<text class="cj" x="84" y="85.5" font-size="3.6" fill="#e8e8ee">小红书</text>
</svg>
<text class="cj" x="946" y="768.6" font-size="21.2" fill="#262626">杨帆（三国法）</text>
<svg x="1103" y="776.8" width="172.5" height="167.7" viewBox="0 0 172.5 167.7">
<defs><linearGradient id="p5g" x1="0" y1="0" x2="0" y2="1"><stop offset="0" stop-color="#6199d8"/><stop offset="1" stop-color="#699fdb"/></linearGradient></defs>
<rect x="0" y="0" width="173" height="168" fill="url(#p5g)"/>
<g transform="translate(25.5 1.5) scale(1.1)"><path d="M2 4 l26 -2 v30 l-26 8z" fill="#2f5c9c"/><path d="M0 3 q9 -5 22 -1 q4 12 -1 24 q-10 5 -20 -1 q4 -10 -1 -22z" fill="#e8ab42"/><path d="M2 7 q10 -3 20 4 M1.5 12.5 q10 -2 21 5 M2.5 18 q9 -1 18 5 M2 23 q7 0 14 4" stroke="#27325a" stroke-width="2" fill="none"/></g>
<text class="cj" x="61" y="25.3" font-size="18.9" font-weight="bold" fill="#f3f7fb">众合</text>
<text class="cj" transform="translate(100 25.3) skewX(-8)" font-size="18.9" fill="#f3f7fb">法硕</text>
<text x="61.5" y="33" font-size="5" fill="#eaf3fb" font-weight="normal" text-anchor="start" font-family="Liberation Sans, sans-serif" textLength="72" lengthAdjust="spacingAndGlyphs" font-style="italic" font-weight="bold">ZHONGHE  JURIS MASTER</text>
<path d="M30 168 L36 140 Q50 112 70 104 L92 124 L120 98 Q152 110 172.5 150 V168 Z" fill="#5f7fb2" />
<path d="M70 104 l10 20 l12 0z M120 98 l-12 26 l-14 0z" fill="#557299" />
<ellipse cx="91.5" cy="85" rx="24.5" ry="37.5" fill="#cbb5b0"/>
<path d="M66.5 86 q-5 -42 25 -42 q30 0 25.5 42 q-2 -16 -6 -22 q-10 -6 -20 -5 q-10 0 -18 5 q-4 8 -6.5 22z" fill="#2e3238"/>
<g fill="#b9aaa9" fill-opacity=".5" stroke="#3a3d44" stroke-width="2"><rect x="72" y="78" width="17" height="13" rx="5"/><rect x="96" y="78" width="17" height="13" rx="5"/></g><path d="M89 82 h7 M72 82 l-5 -2 M113 82 l4 -2" stroke="#3a3d44" stroke-width="1.6" fill="none"/>
<path d="M84 106 q8 -2.5 16 0" fill="none" stroke="#8a6660" stroke-width="1.8" />
<path d="M90 92 q-2 6 3 7" fill="none" stroke="#ad9690" stroke-width="1.3" />
<path d="M141 143 L172 161" fill="none" stroke="#35425c" stroke-width="1.7" />
<circle cx="117.5" cy="125" r="2.2" fill="#e8e0e4"/><circle cx="120" cy="128.5" r="1.5" fill="#b8404a"/>
</svg>
<text class="cj" x="1126.3" y="971.3" font-size="21.2" fill="#262626">马峰（理论法）</text>
<svg x="1061" y="979.5" width="222.8" height="166" viewBox="0 0 222.8 166">
<defs><radialGradient id="p6g" cx="47%" cy="48%" r="70%"><stop offset="0" stop-color="#efe1d8"/><stop offset=".45" stop-color="#dcb9a8"/><stop offset="1" stop-color="#c99e8c"/></radialGradient></defs>
<rect x="0" y="0" width="223" height="166" fill="url(#p6g)"/>
<path d="M134 78L293.9 72.7L293.9 83.3z" fill="#f2c648" opacity=".62"/><path d="M132.2 88.3L285.2 135.1L279.5 150.7z" fill="#fffaf0" opacity=".62"/><path d="M127 97.3L252.9 196L246.1 204.1z" fill="#f2c648" opacity=".62"/><path d="M121.6 102.3L222.3 226.7L208.9 236.4z" fill="#fffaf0" opacity=".62"/><path d="M112.3 106.8L161.5 259.1L151.3 262z" fill="#f2c648" opacity=".62"/><path d="M101.9 107.9L99 267.9L82.5 266.8z" fill="#fffaf0" opacity=".62"/><path d="M94.7 106.5L50.4 260.3L40.3 257z" fill="#f2c648" opacity=".62"/><path d="M85.5 101.6L-6.3 232.7L-19.4 222.5z" fill="#fffaf0" opacity=".62"/><path d="M78.6 93.9L-54.3 183.1L-59.9 174.1z" fill="#f2c648" opacity=".62"/><path d="M75.5 87.3L-74 144.5L-79.1 128.8z" fill="#fffaf0" opacity=".62"/><path d="M74 77L-86 76.7L-85.6 66.1z" fill="#f2c648" opacity=".62"/><path d="M76.2 66.8L-75.1 14.6L-68.9 -0.8z" fill="#fffaf0" opacity=".62"/><path d="M79.7 60.4L-52.8 -29.3L-46.5 -37.9z" fill="#f2c648" opacity=".62"/><path d="M87.2 53.1L-9 -74.7L4.7 -84z" fill="#fffaf0" opacity=".62"/><path d="M96.7 48.9L52.9 -105L63.2 -107.6z" fill="#f2c648" opacity=".62"/><path d="M104 48L95.7 -111.8L112.3 -111.8z" fill="#fffaf0" opacity=".62"/><path d="M114.3 49.8L164 -102.3L173.9 -98.7z" fill="#f2c648" opacity=".62"/><path d="M123.3 55L219.7 -72.7L232.4 -62.1z" fill="#fffaf0" opacity=".62"/><path d="M128.3 60.4L254.5 -37.9L260.8 -29.3z" fill="#f2c648" opacity=".62"/><path d="M132.8 69.7L284.2 17.7L288.8 33.6z" fill="#fffaf0" opacity=".62"/>
<path d="M132 128 q20 -22 40 -6 q8 14 0 46 h-46z" fill="#ecd6d6"/><path d="M140 150 q10 -10 24 -2 l-2 20 h-20z" fill="#d9dcae" opacity=".8"/>
<path d="M52 168 l10 -38 q6 -14 24 -20 h36 q18 6 24 20 l8 38z" fill="#fff" stroke="#fff" stroke-width="7" stroke-linejoin="round"/>
<path d="M81 74 a23 33 0 1 0 46 0 a23 33 0 1 0 -46 0z" fill="#fff" stroke="#fff" stroke-width="7" />
<path d="M52 168 l10 -38 q6 -14 24 -20 h36 q18 6 24 20 l8 38z" fill="#131313" />
<path d="M92 104 l12 16 l12 -16z" fill="#f3f3f3" />
<path d="M81 74 a23 33 0 1 0 46 0 a23 33 0 1 0 -46 0z" fill="#d3b6ab" />
<path d="M80 70 q-2 -34 24 -34 q26 0 24 34 q-4 -14 -8 -18 q-16 -4 -32 0 q-5 5 -8 18z" fill="#39322e"/>
<path d="M88 72 h13 M107 72 h13 M101 73 h6" fill="none" stroke="#4a3f3b" stroke-width="1.4" />
<ellipse cx="104" cy="96" rx="5" ry="1.6" fill="#a25d50"/>
<path d="M72 168 l2 -34 q0 -14 8 -24 q5 -5 9 -1 q4 6 1 16 l-1 43z" fill="#d9baae" stroke="#fff" stroke-width="2" />
<path d="M100 130 v30 M108 132 l-3 28" fill="none" stroke="#d8b13a" stroke-width="2" />
<g font-size="19.5" font-weight="bold" fill="#efa32a" stroke="#9c5a18" stroke-width="0.98" paint-order="stroke" stroke-linejoin="round">
<text class="cj" transform="translate(15.25 50.5) skewX(-10)">今</text>
<text class="cj" transform="translate(16.05 69.7) skewX(-10)">年</text>
<text class="cj" transform="translate(16.85 88.9) skewX(-10)">定</text>
<text class="cj" transform="translate(17.65 108.1) skewX(-10)">能</text>
<text class="cj" transform="translate(18.45 127.3) skewX(-10)">上</text>
<text class="cj" transform="translate(19.25 146.5) skewX(-10)">岸</text>
<text class="cj" transform="translate(182.25 50.5) skewX(-10)">为</text>
<text class="cj" transform="translate(183.05 69.7) skewX(-10)">师</text>
<text class="cj" transform="translate(183.85 88.9) skewX(-10)">掐</text>
<text class="cj" transform="translate(184.65 108.1) skewX(-10)">指</text>
<text class="cj" transform="translate(185.45 127.3) skewX(-10)">一</text>
<text class="cj" transform="translate(186.25 146.5) skewX(-10)">算</text>
</g>
</svg>
<g>
<path d="M727 915 q-2 34 12 48 q8 7 16 6 v-52z" fill="#f0d6a9" stroke="#141414" stroke-width="2.3" stroke-linejoin="round" stroke-linecap="round" />
<path d="M727 915 q10 -9 28 -7 v14 q-18 3 -28 -7z" fill="#f6e7c9" stroke="#141414" stroke-width="2.3" stroke-linejoin="round" stroke-linecap="round" />
<circle cx="745" cy="915" r="4.6" fill="#f3ecdd" stroke="#141414" stroke-width="1.6"/>
<path d="M729 934 q10 8 26 8 M733 948 l7 2 M744 956 l7 1" fill="none" stroke="#141414" stroke-width="1.8" stroke-linejoin="round" stroke-linecap="round" />
<path d="M747 826 q-18 40 -19 90 M750 838 q-14 36 -15 76" fill="none" stroke="#141414" stroke-width="2" stroke-linejoin="round" stroke-linecap="round" />
<path d="M814.5 730 L904 702.5 L906 707.8 L817.5 736z" fill="#edd5a6" stroke="#141414" stroke-width="1.8" stroke-linejoin="round" stroke-linecap="round" />
<path d="M826 740 q30 -8 56 -2 l10 2 q14 22 6 52 q-26 10 -54 -8 l-16 -14z" fill="#c9cbda" stroke="#141414" stroke-width="2.3" stroke-linejoin="round" stroke-linecap="round" />
<path d="M879 738 q14 0 23 6 q6 26 -4 48 q-16 5 -31 -2 q-8 -26 12 -52z" fill="#fbfbfb" stroke="#141414" stroke-width="2.3" stroke-linejoin="round" stroke-linecap="round" />
<path d="M893 742 q10 -4 15 4 q3 12 -3 24 q-8 2 -12 -2z" fill="#9fa3b3" stroke="#141414" stroke-width="2" stroke-linejoin="round" stroke-linecap="round" />
<ellipse cx="901" cy="748" rx="7.5" ry="9" fill="none" stroke="#141414" stroke-width="2"/>
<path d="M897 709 L884 798 L858 958 M903 710 L891 800 L868 952" fill="none" stroke="#141414" stroke-width="2" stroke-linejoin="round" stroke-linecap="round" />
<path d="M899 712 L981 929 M905 712 L988 933" fill="none" stroke="#141414" stroke-width="2.2" stroke-linejoin="round" stroke-linecap="round" />
<path d="M764 746 q-12 6 -17 28 l2 56 q4 40 3 70 l6 181 q64 4 127 -10 l0 -64 q-10 -70 -30 -127 l-12 -44 l-4 -34 q10 -14 8 -26 l-12 -24 q-4 -10 -14 -12 l-24 -8 q-16 14 -33 14z" fill="#c9cbda" stroke="#141414" stroke-width="2.3" stroke-linejoin="round" stroke-linecap="round" />
<path d="M885 1007 l17 49 l-15 14z" fill="#f4f4f6" stroke="#141414" stroke-width="2.3" stroke-linejoin="round" stroke-linecap="round" />
<path d="M742 783 l4 14 M830 756 l2 16" fill="none" stroke="#141414" stroke-width="2" stroke-linejoin="round" stroke-linecap="round" />
<path d="M764 747 q-22 0 -40 -8 l-17 -2 q-18 24 -13 42 q6 14 26 18 q18 0 28 -10 l4 -16z" fill="#c9cbda" stroke="#141414" stroke-width="2.3" stroke-linejoin="round" stroke-linecap="round" />
<path d="M707 737 q-7 18 2 32 q6 8 16 9 q14 -4 20 -26 q-12 8 -24 2 q-8 -6 -6 -16z" fill="#fbfbfb" stroke="#141414" stroke-width="2.3" stroke-linejoin="round" stroke-linecap="round" />
<path d="M723 747 q8 -8 18 -2 l4 6 q-4 14 -14 16 q-10 -2 -8 -20z" fill="#8f95a3" stroke="#141414" stroke-width="2" stroke-linejoin="round" stroke-linecap="round" />
<path d="M722 744 q-3 -18 0 -32 q2 -6 6 -4 q2 -4 6 -2 q3 -3 6 0 q4 0 4 6 l0 14 q4 -4 6 0 q0 12 -8 20 q-10 8 -20 -2z" fill="#f8d3cb" stroke="#141414" stroke-width="2.3" stroke-linejoin="round" stroke-linecap="round" />
<path d="M728 708 v6 M734 706 v7 M740 706 v8" fill="none" stroke="#141414" stroke-width="1.6" stroke-linejoin="round" stroke-linecap="round" />
<path d="M801 731 q14 0 25 7 q4 12 3 25 q-4 6 -11 7 q-8 -2 -13 -7z" fill="#fbfbfb" stroke="#141414" stroke-width="2.3" stroke-linejoin="round" stroke-linecap="round" />
<path d="M762 745 q18 -2 33 -12 l4 10 q-10 12 -22 14 l-6 -6z" fill="#fbfbfb" stroke="#141414" stroke-width="2.3" stroke-linejoin="round" stroke-linecap="round" />
<path d="M762 745 l8 10 l6 -5" fill="#fbfbfb" stroke="#141414" stroke-width="2" stroke-linejoin="round" stroke-linecap="round" />
<ellipse cx="753.5" cy="721" rx="3.8" ry="4.5" fill="#f7e0d4" stroke="#141414" stroke-width="2"/>
<ellipse cx="797" cy="713" rx="3.8" ry="4.5" fill="#f7e0d4" stroke="#141414" stroke-width="2"/>
<path d="M756.5 718 a19 22.5 -8 1 0 38 -4 a19 22.5 -8 1 0 -38 4z" fill="#f7e0d4" stroke="#141414" stroke-width="2.3" stroke-linejoin="round" stroke-linecap="round" />
<path d="M752 719 q-5 -18 2 -28 q10 -10 28 -8 q14 3 16 20 l-1 8 q-4 -10 -10 -16 q-14 -2 -26 4 q-6 8 -9 20z" fill="#111" stroke="#141414" stroke-width="1.6" stroke-linejoin="round" stroke-linecap="round" />
<circle cx="765.5" cy="706.5" r="1.8" fill="#111"/><circle cx="782" cy="704" r="1.8" fill="#111"/>
<path d="M762 701 l5 2 M786 699 l-5 2" fill="none" stroke="#141414" stroke-width="1.5" stroke-linejoin="round" stroke-linecap="round" />
<ellipse cx="776.5" cy="721" rx="4.8" ry="6" fill="#111"/><ellipse cx="776.8" cy="722.5" rx="2.6" ry="3.2" fill="#eaa59c"/>
<path d="M749 828 q36 10 78 0 l1 11 q-40 12 -78 1z" fill="#767270" stroke="#141414" stroke-width="2" stroke-linejoin="round" stroke-linecap="round" />
<path d="M833 840 l-4 21 l12 17 l9 -8 l8 -2 l7 -13 l-17 -24z" fill="#767270" stroke="#141414" stroke-width="2" stroke-linejoin="round" stroke-linecap="round" />
<path d="M838 848 l6 22 M846 846 l12 16" fill="none" stroke="#141414" stroke-width="1.6" stroke-linejoin="round" stroke-linecap="round" />
<ellipse cx="835.5" cy="832" rx="9.5" ry="8.5" fill="#767270" stroke="#141414" stroke-width="2"/>
<path d="M845 949 a77.5 27 -2 1 0 155 -5 a77.5 27 -2 1 0 -155 5z" fill="#f6e9cf" stroke="#141414" stroke-width="2.3" stroke-linejoin="round" stroke-linecap="round" />
<ellipse cx="958" cy="938" rx="8.5" ry="7.5" fill="#f4eee2" stroke="#141414" stroke-width="1.8"/>
<ellipse cx="947" cy="948" rx="7" ry="7" fill="#f4eee2" stroke="#141414" stroke-width="1.8"/>
<ellipse cx="933" cy="956" rx="7" ry="6" fill="#f4eee2" stroke="#141414" stroke-width="1.8"/>
<ellipse cx="864" cy="950" rx="9" ry="7" fill="#f4eee2" stroke="#141414" stroke-width="1.8"/>
<ellipse cx="972" cy="944" rx="6" ry="5" fill="#f4eee2" stroke="#141414" stroke-width="1.8"/>
<path d="M884 960 q-8 -28 -4 -56 q2 -12 12 -14 q8 -4 14 4 q6 -8 16 -8 q16 2 22 20 q6 20 -2 34 q-10 18 -30 24z" fill="#a9bfa6" stroke="#141414" stroke-width="2" stroke-linejoin="round" stroke-linecap="round" />
<path d="M889 958 q-4 -22 8 -42 q-2 24 10 44z" fill="#eef3ee" stroke="#141414" stroke-width="1.6" stroke-linejoin="round" stroke-linecap="round" />
<path d="M904 962 q-4 -14 6 -24 q8 -10 12 -36 q6 24 -2 44 q4 8 -2 16 q-8 4 -14 0z" fill="#f0f4f0" stroke="#141414" stroke-width="1.8" stroke-linejoin="round" stroke-linecap="round" />
<path d="M906 894 q-8 30 -6 60 M922 902 l-8 30" fill="none" stroke="#141414" stroke-width="1.8" stroke-linejoin="round" stroke-linecap="round" />
<path d="M845 949 q4 34 16 50 q52 24 126 -8 q12 -20 13 -47 q-8 18 -60 27 q-68 8 -95 -22z" fill="#f0d6a9" stroke="#141414" stroke-width="2.3" stroke-linejoin="round" stroke-linecap="round" />
<path d="M848 968 q40 32 148 -2" fill="none" stroke="#141414" stroke-width="2" stroke-linejoin="round" stroke-linecap="round" />
<path d="M860 962 l8 3 M889 976 l12 2 M932 980 l14 -2 M970 972 l10 -4 M863 990 l9 3 M890 1000 l16 1 M940 1000 l16 -3 M982 985 l8 -4" fill="none" stroke="#141414" stroke-width="1.8" stroke-linejoin="round" stroke-linecap="round" />
<path d="M780 1083 q-4 12 -6.5 22 q1 5 8 4.5 q10 -2 18 -9 q8 -7 10 -13 l-1.5 -6z" fill="#111" stroke="#141414" stroke-width="1.5" stroke-linejoin="round" stroke-linecap="round" />
<path d="M834 1082 h23.5 q2 8 0 15 q-3 9 -9 12 q-7 1 -10 -5 q-4 -8 -4.5 -22z" fill="#111" stroke="#141414" stroke-width="1.5" stroke-linejoin="round" stroke-linecap="round" />
</g>
<path d="M579.5 887 v13.5 l3.2 -3 l2.4 5.4 l2 -0.9 l-2.4 -5.3 h4.4z" fill="#fff" stroke="#222" stroke-width="1" stroke-linejoin="round"/>
<rect x="1529" y="1026" width="7" height="49" fill="#bdbdbd" rx="3.5"/>
<path d="M1529.5 542.5 l3 -5 l3 5z" fill="#8a8a8a" />
<g fill="none" stroke="#444" stroke-width="1.3" stroke-linecap="round" stroke-linejoin="round">
<path d="M1564.5 555.5 h12"/>
<path d="M1563 585.5 h3 M1571 585.5 h7 M1563 593 h8 M1576 593 h2"/><circle cx="1568" cy="585.5" r="2"/><circle cx="1573.5" cy="593" r="2"/>
<path d="M1570.5 624.5 l2.3 4.8 l5.2 0.7 l-3.8 3.6 l0.9 5.2 l-4.6 -2.5 l-4.6 2.5 l0.9 -5.2 l-3.8 -3.6 l5.2 -0.7z"/><path d="M1563.5 636 h4 M1563.5 639 h3"/>
<rect x="1563.5" y="666.5" width="9.5" height="8" rx="1"/><rect x="1568.5" y="671.5" width="9.5" height="8" rx="1" fill="#ececec"/><path d="M1564.5 678 l2 2 l2 -2"/>
<path d="M1567.5 709.5 l-4 2.5 v4 h2 v7 h4 M1567.5 709.5 q3 2 6 0 l4 2.5 v3"/><path d="M1571.5 723 q0 -6 6 -7 q0 6 -6 7z M1569.5 722 q-1 -4 1 -6"/>
<path d="M1564 751.5 l3 -3 l10 10 l-3 3z M1566.5 754 l3 -3"/><path d="M1575.5 748 v3 M1574 749.5 h3 M1564.5 760 v3 M1563 761.5 h3"/>
<path d="M1570.5 794.5 q-3.5 -2 -7.5 -1.5 v11.5 q4 -0.5 7.5 1.5 M1570.5 794.5 q3.5 -2 7.5 -1.5 v5 M1570.5 794.5 v11.5"/><circle cx="1575" cy="803.5" r="2.6"/><path d="M1577 805.5 l2 2"/>
<circle cx="1570.5" cy="842.5" r="7.5"/><path d="M1568 840.5 a2.5 2.5 0 1 1 3.5 2.3 q-1 0.5 -1 1.7"/><circle cx="1570.5" cy="847" r=".5"/>
<path d="M1567.5 877.5 l-4 2.5 v4 h2 v7 h5 M1567.5 877.5 q3 2 6 0 l4 2.5 v4 h-2"/><path d="M1574.5 885 l1 2.2 l2.4 0.3 l-1.7 1.7 l0.4 2.4 l-2.1 -1.2 l-2.1 1.2 l0.4 -2.4 l-1.7 -1.7 l2.4 -0.3z"/>
<circle cx="1564.5" cy="926" r="1.7"/><circle cx="1570.5" cy="926" r="1.7"/><circle cx="1576.5" cy="926" r="1.7"/>
</g>
<defs><linearGradient id="spg" x1="0" y1="0" x2="1" y2="1"><stop offset="0" stop-color="#c9868a"/><stop offset=".6" stop-color="#c06f78"/><stop offset="1" stop-color="#9a4f5c"/></linearGradient></defs>
<path d="M39 503 q6 -8 14 -6 q10 6 14 16 q2 8 0 12 q-10 0 -18 -7 q-8 -7 -10 -15z" fill="url(#spg)"/>
<path d="M38.5 503.5 q3 -6 10 -7.5 q3 2 3 4 q-5 6 -11 6 q-2 -1 -2 -2.5z" fill="#f0c36a"/><path d="M40 503 q3 -4.5 8 -5.5 q1.5 1 1.5 2 q-4 4 -8 4.5z" fill="#f7dd92"/>
<defs><linearGradient id="dk" x1="0" y1="0" x2="0" y2="1"><stop offset="0" stop-color="#000" stop-opacity="0"/><stop offset=".4" stop-color="#000" stop-opacity=".04"/><stop offset=".75" stop-color="#000" stop-opacity=".10"/><stop offset="1" stop-color="#000" stop-opacity=".16"/></linearGradient></defs>
<rect x="0" y="545" width="1600" height="600" fill="url(#dk)"/>
</g></g>
<g font-size="34.6" fill="#fff" opacity="0.8" stroke="#fff" stroke-width="0.35">
<text class="cj" x="30" y="413">忽饼癖进入房间</text>
<text class="cj" x="30" y="468" textLength="252.3" lengthAdjust="spacingAndGlyphs">君言憬.进入房间</text>
<text class="cj" x="30" y="578" textLength="170.6" lengthAdjust="spacingAndGlyphs">|-|进入房间</text>
<text class="cj" x="30" y="633" textLength="272" lengthAdjust="spacingAndGlyphs">L.小鱼儿进入房间</text>
<text class="cj" x="30" y="688" textLength="217.7" lengthAdjust="spacingAndGlyphs">闪闪.进入房间</text>
<text class="cj" x="30" y="743" textLength="412.2" lengthAdjust="spacingAndGlyphs">法学12204郭晓峰进入房间</text>
<text class="cj" x="30" y="798" textLength="170.6" lengthAdjust="spacingAndGlyphs">|-|进入房间</text>
<text class="cj" x="30" y="853">鱼摆摆进入房间</text>
<text class="cj" x="30" y="908" textLength="286.9" lengthAdjust="spacingAndGlyphs">椒盐柠檬.进入房间</text>
<text class="cj" x="30" y="963" textLength="268.8" lengthAdjust="spacingAndGlyphs">Nuyoah.进入房间</text>
<text class="cj" x="30" y="1018" textLength="415.6" lengthAdjust="spacingAndGlyphs">法学 32402吴雨...进入房间</text>
</g>
<circle cx="74" cy="1090" r="44" fill="#555" opacity=".33"/>
<path d="M74 1066.5 c14 0 24.5 9.5 24.5 21 c0 8 -5 15 -12.5 18.5 l-2.5 7 l-6 -4.8 c-1.1 0.1 -2.3 0.2 -3.5 0.2 c-14 0 -24.5 -9.3 -24.5 -20.9 c0 -11.5 10.5 -21 24.5 -21z" fill="none" stroke="#fff" stroke-width="5" stroke-linejoin="round"/>
<circle cx="1352" cy="1090" r="44" fill="#a5a3a5" opacity=".97"/>
<g fill="none" stroke="#fff" stroke-linecap="round" stroke-linejoin="round"><path transform="translate(1349 1092) scale(1.09) translate(-1349 -1091)" stroke-width="3.5" d="M1331 1075.5 c-3 -3.5 -3 -7.5 1 -9.5 c3 -2 5 -1.5 6.5 1 l4 7 c1.2 2.3 0.5 4.2 -1.5 5.5 c-1.5 1 -2 2.5 -1 4.5 c3 6 7 11 12 14.5 c2 1.3 3.5 1 4.8 -0.5 c1.7 -2 3.7 -2.3 5.7 -0.8 l6 4.8 c2.3 2 2.3 4 0 6.5 c-3 3.5 -7 3.5 -11 1.5 c-12 -6.5 -21.5 -18 -26.5 -34.5z"/><path stroke-width="4.2" d="M1357.4 1076.3 a9 9 0 0 1 9 9"/><path stroke-width="4.2" d="M1358.2 1064.6 a19.5 19.5 0 0 1 19 19"/></g>
<circle cx="1483" cy="1090.5" r="44" fill="#a5a3a5" opacity=".97"/>
<circle cx="1465.2" cy="1091" r="5.2" fill="#fff"/>
<circle cx="1483" cy="1091" r="5.2" fill="#fff"/>
<circle cx="1500.8" cy="1091" r="5.2" fill="#fff"/>
<rect x="0" y="1144" width="1600" height="16" fill="#000"/>
<defs><linearGradient id="bb" x1="0" y1="0" x2="0" y2="1"><stop offset="0" stop-color="#71808c"/><stop offset="1" stop-color="#748093"/></linearGradient></defs>
<path d="M0 1200 V1180 a20 20 0 0 1 20 -20 H1580 a20 20 0 0 1 20 20 V1200 Z" fill="url(#bb)"/>
<ellipse cx="779" cy="1152" rx="6" ry="4.2" fill="#e6e6e6"/>
<ellipse cx="799.5" cy="1152" rx="6" ry="4.2" fill="#e6e6e6"/>
<ellipse cx="819.5" cy="1152" rx="6" ry="4.2" fill="#e6e6e6"/>
</svg>
</body></html>
